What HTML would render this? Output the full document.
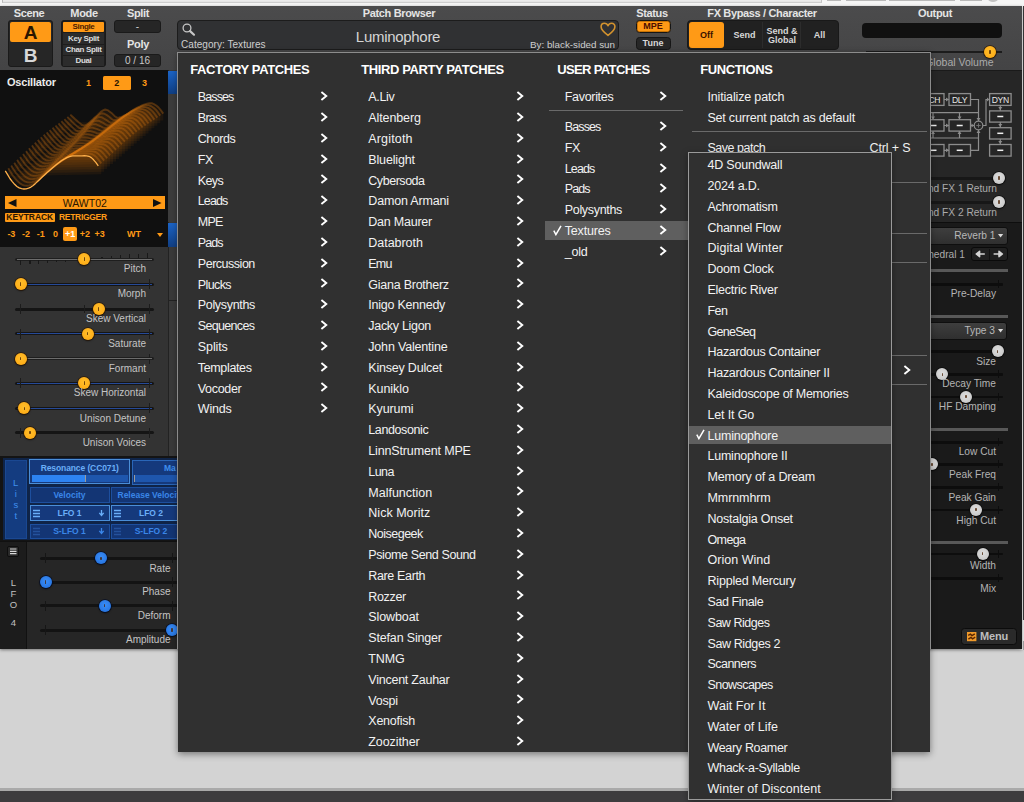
<!DOCTYPE html>
<html><head><meta charset="utf-8"><title>Surge XT</title><style>
*{box-sizing:border-box;margin:0;padding:0}
html,body{width:1024px;height:802px;overflow:hidden}
body{position:relative;background:#d3d3d3;font-family:"Liberation Sans",sans-serif;font-size:12px;color:#eee}
.a{position:absolute}
.t{position:absolute;white-space:nowrap;line-height:1}
.b{font-weight:bold}
.lbl{color:#e4e4e4;font-weight:bold;font-size:11px;text-align:center;letter-spacing:-0.35px}
.mi{position:absolute;white-space:nowrap;font-size:12.5px;line-height:14px;height:14px;color:#f2f2f2;letter-spacing:-0.28px}
.mh{position:absolute;white-space:nowrap;font-size:13px;font-weight:bold;line-height:14px;color:#fff;letter-spacing:-0.4px}
.sl{position:absolute;white-space:nowrap;font-size:10px;line-height:10px;color:#c4c4c4;text-align:right}
.fl{position:absolute;white-space:nowrap;font-size:10px;line-height:10px;color:#ababab;text-align:right}
.kn{position:absolute;width:12px;height:12px;border-radius:50%}
.ko{background:radial-gradient(circle at 50% 42%,#ffbe2c 0%,#ffb01a 62%,#f09c0a 100%);box-shadow:0 0 0 0.8px rgba(45,22,0,.85),0 1px 2px rgba(0,0,0,.6)}
.kb{background:radial-gradient(circle at 50% 42%,#3b8df5 0%,#2a7ae6 62%,#1d66cc 100%);box-shadow:0 0 0 0.8px rgba(0,12,40,.85),0 1px 2px rgba(0,0,0,.6)}
.kg{background:radial-gradient(circle at 50% 42%,#dedede 0%,#cdcdcd 62%,#b0b0b0 100%);box-shadow:0 0 0 0.8px rgba(10,10,10,.85),0 1px 2px rgba(0,0,0,.6)}
.kn i{position:absolute;left:5.3px;top:4.4px;width:1.4px;height:3.2px;border-radius:0.7px;background:rgba(70,30,0,.75)}
.sep{position:absolute;height:1px;background:#6a6a6a}
</style></head><body>
<div class="a" style="left:0;top:0;width:1024px;height:6px;background:#f5f5f5"></div>
<div class="a" style="left:2px;top:0;width:820px;height:3px;background:linear-gradient(#eeeeee,#e2e2e2);border-left:1px solid #b9b9b9;border-right:1px solid #c4c4c4;border-bottom:1px solid #cdcdcd"></div>
<div class="a" style="left:827px;top:0;width:14px;height:1px;background:#b9b9b9"></div>
<div class="a" style="left:846px;top:0;width:39.5px;height:1px;background:#b9b9b9"></div>
<div class="a" style="left:889px;top:0;width:65.5px;height:1px;background:#b9b9b9"></div>
<div class="a" style="left:960px;top:0;width:21.5px;height:1px;background:#b9b9b9"></div>
<div class="a" style="left:988px;top:-4px;width:10px;height:6px;border-radius:50%;background:#c2c2c2"></div>
<div class="a" style="left:0;top:788px;width:1024px;height:4px;background:#a9a9a9"></div>
<div class="a" style="left:0;top:791px;width:1024px;height:11px;background:#3d3c3e"></div>
<div class="a" style="left:1022px;top:6px;width:1px;height:644px;background:#f4f4f4"></div>
<div class="a" style="left:1023px;top:6px;width:1px;height:614px;background:#3a3a3a"></div>
<div class="a" style="left:1023px;top:620px;width:1px;height:21px;background:#f0f0f0"></div>
<div class="a" style="left:1023px;top:641px;width:1px;height:9px;background:#a8a8a8"></div>
<div class="a" style="left:1014px;top:649px;width:9px;height:1px;background:linear-gradient(90deg,rgba(255,255,255,0),#f4f4f4)"></div>
<div class="a" id="synth" style="left:0;top:6px;width:1022px;height:643px;background:#1b1b1b;box-shadow:0 1px 3px rgba(0,0,0,.45);overflow:hidden">
<div class="a" style="left:0;top:0;width:1022px;height:63.5px;background:linear-gradient(#4b4b4c,#444445)"></div>
<div class="t lbl" style="left:0;top:2.3000000000000007px;width:58px">Scene</div>
<div class="a" style="left:8px;top:14px;width:45px;height:47px;background:#262626;border:1px solid #1a1a1a;border-radius:3px"></div>
<div class="a" style="left:10px;top:16px;width:41px;height:20px;background:#ff9a16;border-radius:2px"></div>
<div class="t b" style="left:10px;top:17px;width:41px;text-align:center;font-size:19px;color:#2a1600">A</div>
<div class="t b" style="left:10px;top:40px;width:41px;text-align:center;font-size:19px;color:#d8d8d8">B</div>
<div class="t lbl" style="left:54px;top:2.3000000000000007px;width:60px">Mode</div>
<div class="a" style="left:61px;top:14px;width:45px;height:47px;background:#1d1d1d;border:1px solid #1a1a1a;border-radius:3px"></div>
<div class="a" style="left:63px;top:16.0px;width:41px;height:10.3px;background:#ff9a16;border-radius:1px"></div>
<div class="t b" style="left:58px;top:17.2px;width:51px;text-align:center;font-size:8px;letter-spacing:-0.35px;color:#4a1c00">Single</div>
<div class="a" style="left:63px;top:27.299999999999997px;width:41px;height:10.3px;background:#2c2c2c"></div>
<div class="t b" style="left:58px;top:28.5px;width:51px;text-align:center;font-size:8px;letter-spacing:-0.35px;color:#dcdcdc">Key Split</div>
<div class="a" style="left:63px;top:38.6px;width:41px;height:10.3px;background:#2c2c2c"></div>
<div class="t b" style="left:58px;top:39.800000000000004px;width:51px;text-align:center;font-size:8px;letter-spacing:-0.35px;color:#dcdcdc">Chan Split</div>
<div class="a" style="left:63px;top:49.900000000000006px;width:41px;height:10.3px;background:#2c2c2c"></div>
<div class="t b" style="left:58px;top:51.10000000000001px;width:51px;text-align:center;font-size:8px;letter-spacing:-0.35px;color:#dcdcdc">Dual</div>
<div class="t lbl" style="left:108px;top:2.3000000000000007px;width:60px">Split</div>
<div class="a" style="left:114px;top:14px;width:47px;height:13px;background:#262626;border:1px solid #1a1a1a;border-radius:3px"></div>
<div class="t" style="left:114px;top:15.5px;width:47px;text-align:center;font-size:10px;color:#d0d0d0">-</div>
<div class="t lbl" style="left:108px;top:32.5px;width:60px">Poly</div>
<div class="a" style="left:114px;top:48px;width:47px;height:13px;background:#262626;border:1px solid #1a1a1a;border-radius:3px"></div>
<div class="t" style="left:114px;top:50px;width:47px;text-align:center;font-size:10px;color:#c8c8c8">0 / 16</div>
<div class="t lbl" style="left:340px;top:2.3000000000000007px;width:118px">Patch Browser</div>
<div class="a" style="left:177px;top:14px;width:441.5px;height:29.7px;background:#303133;border:1px solid #1c1c1c;border-radius:4px"></div>
<svg class="a" style="left:181.6px;top:17px" width="14" height="14" viewBox="0 0 14 14"><circle cx="5" cy="5" r="3.9" fill="none" stroke="#c6c6c6" stroke-width="1.3"/><path d="M8.1 8.1 L12 11.7" stroke="#c6c6c6" stroke-width="2.2" stroke-linecap="round"/></svg>
<div class="t" style="left:181px;top:33.5px;font-size:10px;letter-spacing:0.05px;color:#cfcfcf">Category: Textures</div>
<div class="t" style="left:298px;top:23px;width:200px;text-align:center;font-size:15px;color:#d6d6d6;letter-spacing:-0.3px">Luminophore</div>
<div class="t" style="left:415px;top:33.5px;width:200px;text-align:right;font-size:9.8px;color:#cfcfcf">By: black-sided sun</div>
<svg class="a" style="left:599.8px;top:16px" width="16" height="15" viewBox="0 0 16 15"><path d="M8 3.7 C7.3 2 5.8 1.3 4.4 1.3 C2.4 1.3 1.1 2.9 1.1 4.8 C1.1 8.2 4.6 10.9 8 13.4 C11.4 10.9 14.9 8.2 14.9 4.8 C14.9 2.9 13.6 1.3 11.6 1.3 C10.2 1.3 8.7 2 8 3.7 Z" fill="none" stroke="#d2922e" stroke-width="1.6" stroke-linejoin="round"/></svg>
<div class="t lbl" style="left:622px;top:2.3000000000000007px;width:60px">Status</div>
<div class="a" style="left:635.5px;top:14px;width:35px;height:13px;background:#ff9a16;border:1.5px solid #161616;border-radius:3.5px;box-shadow:inset 0 0 0 0.7px #b86800"></div>
<div class="t b" style="left:636px;top:16.4px;width:34px;text-align:center;font-size:9px;color:#4a0e00">MPE</div>
<div class="a" style="left:635.5px;top:31px;width:35px;height:13px;background:#272727;border:1.5px solid #161616;border-radius:3.5px"></div>
<div class="t b" style="left:636px;top:33px;width:34px;text-align:center;font-size:9px;color:#d8d8d8">Tune</div>
<div class="t lbl" style="left:682px;top:2.3000000000000007px;width:160px">FX Bypass / Character</div>
<div class="a" style="left:687px;top:14px;width:152px;height:30px;background:#212121;border:1px solid #191919;border-radius:4px"></div>
<div class="a" style="left:689px;top:16px;width:35px;height:26px;background:#ff9a16;border-radius:3px"></div>
<div class="t b" style="left:689px;top:25px;width:35px;text-align:center;font-size:9px;color:#3a1200">Off</div>
<div class="t b" style="left:726px;top:25px;width:37px;text-align:center;font-size:9px;color:#d8d8d8">Send</div>
<div class="t b" style="left:763px;top:20.5px;width:38px;text-align:center;font-size:9px;line-height:9px;color:#d8d8d8;white-space:normal">Send &amp;<br>Global</div>
<div class="t b" style="left:801px;top:25px;width:37px;text-align:center;font-size:9px;color:#d8d8d8">All</div>
<div class="a" style="left:762px;top:16px;width:1px;height:26px;background:#2c2c2c"></div>
<div class="a" style="left:800px;top:16px;width:1px;height:26px;background:#2c2c2c"></div>
<div class="t lbl" style="left:905px;top:2.3000000000000007px;width:60px">Output</div>
<div class="a" style="left:862px;top:17px;width:140px;height:15px;background:#101010;border-radius:4px"></div>
<div class="a" style="left:866px;top:45px;width:136px;height:2px;background:#1c1c1c"></div>
<div class="kn ko" style="left:984px;top:40px"><i></i></div>
<div class="fl" style="left:860px;top:51px;width:133.5px;font-size:10.5px;line-height:11px">Global Volume</div>
<div class="a" style="left:0;top:63.5px;width:168px;height:177px;background:#101010"></div>
<div class="t b" style="left:7px;top:70.5px;font-size:11px;color:#ececec;letter-spacing:-0.2px">Oscillator</div>
<div class="t b" style="left:80px;top:73px;width:17px;text-align:center;font-size:9px;color:#ff9a16">1</div>
<div class="a" style="left:103px;top:70px;width:27.5px;height:13.5px;background:#ff9a16;border-radius:1.5px"></div>
<div class="t b" style="left:103px;top:73px;width:27.5px;text-align:center;font-size:9px;color:#2a1600">2</div>
<div class="t b" style="left:136px;top:73px;width:17px;text-align:center;font-size:9px;color:#ff9a16">3</div>
<svg class="a" style="left:0;top:89px;filter:blur(0.75px)" width="168" height="100" viewBox="0 95 168 100"><polygon points="70.3,114.6 72.6,116.8 75.0,119.0 77.3,121.0 79.6,123.1 81.9,125.0 84.2,125.6 86.6,124.7 88.9,122.9 91.2,120.7 93.5,118.6 95.9,116.6 98.2,114.3 100.5,112.1 102.8,110.4 105.2,109.5 107.5,110.1 109.8,111.8 112.2,113.6 114.5,115.9 116.8,117.6 119.1,117.4 121.5,116.8 123.8,115.7 126.1,114.6 128.4,113.3 130.8,111.7 133.1,110.1 135.4,108.6 137.7,107.4 140.1,106.3 142.4,105.2 144.7,104.3 147.0,103.6 149.3,103.2 151.7,103.2 154.0,104.1 156.3,105.5 158.6,107.5 161.0,110.4 163.3,113.6 163.3,120.6 70.3,122.6" fill="#c8640a" fill-opacity="0.085"/><polyline points="70.3,114.6 72.6,116.8 75.0,119.0 77.3,121.0 79.6,123.1 81.9,125.0 84.2,125.6 86.6,124.7 88.9,122.9 91.2,120.7 93.5,118.6 95.9,116.6 98.2,114.3 100.5,112.1 102.8,110.4 105.2,109.5 107.5,110.1 109.8,111.8 112.2,113.6 114.5,115.9 116.8,117.6 119.1,117.4 121.5,116.8 123.8,115.7 126.1,114.6 128.4,113.3 130.8,111.7 133.1,110.1 135.4,108.6 137.7,107.4 140.1,106.3 142.4,105.2 144.7,104.3 147.0,103.6 149.3,103.2 151.7,103.2 154.0,104.1 156.3,105.5 158.6,107.5 161.0,110.4 163.3,113.6" fill="none" stroke="#e07a10" stroke-opacity="0.30" stroke-width="1.9" stroke-linejoin="round"/><polygon points="67.3,116.9 69.7,119.2 72.0,121.6 74.3,123.7 76.6,125.9 79.0,127.8 81.3,128.6 83.6,127.8 85.9,126.2 88.3,124.1 90.6,122.2 92.9,120.2 95.2,118.0 97.6,115.9 99.9,114.2 102.2,113.2 104.5,113.7 106.9,115.1 109.2,116.7 111.5,118.7 113.8,120.2 116.2,119.8 118.5,119.0 120.8,117.9 123.1,116.7 125.5,115.3 127.8,113.7 130.1,112.0 132.4,110.5 134.8,109.3 137.1,108.2 139.4,107.1 141.7,106.2 144.1,105.5 146.4,105.1 148.7,105.1 151.0,106.0 153.4,107.5 155.7,109.4 158.0,112.4 160.3,115.6 160.3,123.2 67.3,125.2" fill="#c8640a" fill-opacity="0.085"/><polyline points="67.3,116.9 69.7,119.2 72.0,121.6 74.3,123.7 76.6,125.9 79.0,127.8 81.3,128.6 83.6,127.8 85.9,126.2 88.3,124.1 90.6,122.2 92.9,120.2 95.2,118.0 97.6,115.9 99.9,114.2 102.2,113.2 104.5,113.7 106.9,115.1 109.2,116.7 111.5,118.7 113.8,120.2 116.2,119.8 118.5,119.0 120.8,117.9 123.1,116.7 125.5,115.3 127.8,113.7 130.1,112.0 132.4,110.5 134.8,109.3 137.1,108.2 139.4,107.1 141.7,106.2 144.1,105.5 146.4,105.1 148.7,105.1 151.0,106.0 153.4,107.5 155.7,109.4 158.0,112.4 160.3,115.6" fill="none" stroke="#e07a10" stroke-opacity="0.30" stroke-width="1.9" stroke-linejoin="round"/><polygon points="64.4,119.1 66.7,121.6 69.0,124.0 71.4,126.2 73.7,128.6 76.0,130.6 78.3,131.4 80.7,130.8 83.0,129.4 85.3,127.5 87.6,125.7 90.0,123.9 92.3,121.7 94.6,119.6 96.9,117.9 99.3,116.9 101.6,117.2 103.9,118.5 106.2,119.8 108.6,121.6 110.9,122.8 113.2,122.3 115.5,121.4 117.9,120.2 120.2,118.9 122.5,117.4 124.8,115.7 127.2,114.0 129.5,112.5 131.8,111.2 134.1,110.1 136.5,109.1 138.8,108.2 141.1,107.5 143.4,107.1 145.8,107.1 148.1,107.9 150.4,109.4 152.7,111.4 155.1,114.4 157.4,117.6 157.4,125.7 64.4,127.7" fill="#c8640a" fill-opacity="0.085"/><polyline points="64.4,119.1 66.7,121.6 69.0,124.0 71.4,126.2 73.7,128.6 76.0,130.6 78.3,131.4 80.7,130.8 83.0,129.4 85.3,127.5 87.6,125.7 90.0,123.9 92.3,121.7 94.6,119.6 96.9,117.9 99.3,116.9 101.6,117.2 103.9,118.5 106.2,119.8 108.6,121.6 110.9,122.8 113.2,122.3 115.5,121.4 117.9,120.2 120.2,118.9 122.5,117.4 124.8,115.7 127.2,114.0 129.5,112.5 131.8,111.2 134.1,110.1 136.5,109.1 138.8,108.2 141.1,107.5 143.4,107.1 145.8,107.1 148.1,107.9 150.4,109.4 152.7,111.4 155.1,114.4 157.4,117.6" fill="none" stroke="#e07a10" stroke-opacity="0.30" stroke-width="1.9" stroke-linejoin="round"/><polygon points="61.4,121.2 63.8,123.8 66.1,126.4 68.4,128.7 70.7,131.2 73.1,133.2 75.4,134.2 77.7,133.8 80.0,132.5 82.4,130.8 84.7,129.1 87.0,127.4 89.3,125.3 91.7,123.3 94.0,121.6 96.3,120.5 98.6,120.7 101.0,121.8 103.3,122.9 105.6,124.5 107.9,125.4 110.3,124.9 112.6,123.8 114.9,122.5 117.2,121.1 119.6,119.6 121.9,117.9 124.2,116.1 126.5,114.6 128.9,113.3 131.2,112.2 133.5,111.1 135.8,110.2 138.2,109.5 140.5,109.1 142.8,109.1 145.1,109.8 147.5,111.3 149.8,113.3 152.1,116.3 154.4,119.6 154.4,128.3 61.4,130.3" fill="#c8640a" fill-opacity="0.085"/><polyline points="61.4,121.2 63.8,123.8 66.1,126.4 68.4,128.7 70.7,131.2 73.1,133.2 75.4,134.2 77.7,133.8 80.0,132.5 82.4,130.8 84.7,129.1 87.0,127.4 89.3,125.3 91.7,123.3 94.0,121.6 96.3,120.5 98.6,120.7 101.0,121.8 103.3,122.9 105.6,124.5 107.9,125.4 110.3,124.9 112.6,123.8 114.9,122.5 117.2,121.1 119.6,119.6 121.9,117.9 124.2,116.1 126.5,114.6 128.9,113.3 131.2,112.2 133.5,111.1 135.8,110.2 138.2,109.5 140.5,109.1 142.8,109.1 145.1,109.8 147.5,111.3 149.8,113.3 152.1,116.3 154.4,119.6" fill="none" stroke="#e07a10" stroke-opacity="0.30" stroke-width="1.9" stroke-linejoin="round"/><polygon points="58.5,123.4 60.8,126.1 63.1,128.8 65.5,131.2 67.8,133.7 70.1,135.8 72.4,136.9 74.8,136.6 77.1,135.5 79.4,133.9 81.7,132.4 84.1,130.8 86.4,128.9 88.7,126.9 91.0,125.2 93.4,124.1 95.7,124.2 98.0,125.1 100.3,126.0 102.7,127.3 105.0,128.1 107.3,127.4 109.6,126.3 112.0,124.9 114.3,123.5 116.6,121.9 118.9,120.1 121.3,118.3 123.6,116.7 125.9,115.4 128.2,114.3 130.6,113.3 132.9,112.4 135.2,111.6 137.5,111.2 139.9,111.1 142.2,111.8 144.5,113.2 146.8,115.3 149.2,118.3 151.5,121.5 151.5,130.8 58.5,132.8" fill="#c8640a" fill-opacity="0.085"/><polyline points="58.5,123.4 60.8,126.1 63.1,128.8 65.5,131.2 67.8,133.7 70.1,135.8 72.4,136.9 74.8,136.6 77.1,135.5 79.4,133.9 81.7,132.4 84.1,130.8 86.4,128.9 88.7,126.9 91.0,125.2 93.4,124.1 95.7,124.2 98.0,125.1 100.3,126.0 102.7,127.3 105.0,128.1 107.3,127.4 109.6,126.3 112.0,124.9 114.3,123.5 116.6,121.9 118.9,120.1 121.3,118.3 123.6,116.7 125.9,115.4 128.2,114.3 130.6,113.3 132.9,112.4 135.2,111.6 137.5,111.2 139.9,111.1 142.2,111.8 144.5,113.2 146.8,115.3 149.2,118.3 151.5,121.5" fill="none" stroke="#e07a10" stroke-opacity="0.30" stroke-width="1.9" stroke-linejoin="round"/><polygon points="55.5,125.5 57.9,128.3 60.2,131.1 62.5,133.6 64.8,136.1 67.2,138.3 69.5,139.5 71.8,139.3 74.1,138.4 76.5,137.0 78.8,135.6 81.1,134.1 83.4,132.3 85.8,130.4 88.1,128.7 90.4,127.6 92.7,127.6 95.1,128.3 97.4,129.1 99.7,130.2 102.0,130.8 104.4,130.0 106.7,128.8 109.0,127.4 111.3,125.9 113.7,124.2 116.0,122.4 118.3,120.6 120.6,119.0 123.0,117.7 125.3,116.6 127.6,115.5 129.9,114.6 132.3,113.8 134.6,113.3 136.9,113.2 139.2,113.9 141.6,115.3 143.9,117.3 146.2,120.2 148.5,123.5 148.5,133.4 55.5,135.4" fill="#c8640a" fill-opacity="0.085"/><polyline points="55.5,125.5 57.9,128.3 60.2,131.1 62.5,133.6 64.8,136.1 67.2,138.3 69.5,139.5 71.8,139.3 74.1,138.4 76.5,137.0 78.8,135.6 81.1,134.1 83.4,132.3 85.8,130.4 88.1,128.7 90.4,127.6 92.7,127.6 95.1,128.3 97.4,129.1 99.7,130.2 102.0,130.8 104.4,130.0 106.7,128.8 109.0,127.4 111.3,125.9 113.7,124.2 116.0,122.4 118.3,120.6 120.6,119.0 123.0,117.7 125.3,116.6 127.6,115.5 129.9,114.6 132.3,113.8 134.6,113.3 136.9,113.2 139.2,113.9 141.6,115.3 143.9,117.3 146.2,120.2 148.5,123.5" fill="none" stroke="#e07a10" stroke-opacity="0.30" stroke-width="1.9" stroke-linejoin="round"/><polygon points="52.6,127.7 54.9,130.6 57.2,133.5 59.5,136.0 61.9,138.6 64.2,140.8 66.5,142.0 68.8,142.0 71.2,141.2 73.5,140.0 75.8,138.7 78.1,137.3 80.5,135.6 82.8,133.7 85.1,132.1 87.4,131.0 89.8,130.9 92.1,131.5 94.4,132.1 96.7,133.0 99.1,133.4 101.4,132.6 103.7,131.3 106.0,129.8 108.4,128.3 110.7,126.6 113.0,124.8 115.3,123.0 117.7,121.4 120.0,120.1 122.3,118.9 124.6,117.9 127.0,116.9 129.3,116.2 131.6,115.6 133.9,115.5 136.3,116.0 138.6,117.3 140.9,119.3 143.2,122.2 145.6,125.5 145.6,135.9 52.6,137.9" fill="#c8640a" fill-opacity="0.085"/><polyline points="52.6,127.7 54.9,130.6 57.2,133.5 59.5,136.0 61.9,138.6 64.2,140.8 66.5,142.0 68.8,142.0 71.2,141.2 73.5,140.0 75.8,138.7 78.1,137.3 80.5,135.6 82.8,133.7 85.1,132.1 87.4,131.0 89.8,130.9 92.1,131.5 94.4,132.1 96.7,133.0 99.1,133.4 101.4,132.6 103.7,131.3 106.0,129.8 108.4,128.3 110.7,126.6 113.0,124.8 115.3,123.0 117.7,121.4 120.0,120.1 122.3,118.9 124.6,117.9 127.0,116.9 129.3,116.2 131.6,115.6 133.9,115.5 136.3,116.0 138.6,117.3 140.9,119.3 143.2,122.2 145.6,125.5" fill="none" stroke="#e07a10" stroke-opacity="0.30" stroke-width="1.9" stroke-linejoin="round"/><polygon points="49.6,130.0 51.9,132.9 54.3,135.8 56.6,138.4 58.9,141.0 61.2,143.3 63.6,144.5 65.9,144.6 68.2,144.0 70.5,142.9 72.9,141.8 75.2,140.4 77.5,138.8 79.8,137.0 82.2,135.4 84.5,134.3 86.8,134.1 89.1,134.5 91.5,135.0 93.8,135.7 96.1,136.0 98.4,135.1 100.8,133.8 103.1,132.3 105.4,130.7 107.7,129.0 110.1,127.2 112.4,125.4 114.7,123.8 117.0,122.5 119.4,121.3 121.7,120.3 124.0,119.4 126.3,118.6 128.7,118.0 131.0,117.8 133.3,118.3 135.6,119.5 138.0,121.4 140.3,124.3 142.6,127.5 142.6,138.5 49.6,140.5" fill="#c8640a" fill-opacity="0.085"/><polyline points="49.6,130.0 51.9,132.9 54.3,135.8 56.6,138.4 58.9,141.0 61.2,143.3 63.6,144.5 65.9,144.6 68.2,144.0 70.5,142.9 72.9,141.8 75.2,140.4 77.5,138.8 79.8,137.0 82.2,135.4 84.5,134.3 86.8,134.1 89.1,134.5 91.5,135.0 93.8,135.7 96.1,136.0 98.4,135.1 100.8,133.8 103.1,132.3 105.4,130.7 107.7,129.0 110.1,127.2 112.4,125.4 114.7,123.8 117.0,122.5 119.4,121.3 121.7,120.3 124.0,119.4 126.3,118.6 128.7,118.0 131.0,117.8 133.3,118.3 135.6,119.5 138.0,121.4 140.3,124.3 142.6,127.5" fill="none" stroke="#e07a10" stroke-opacity="0.30" stroke-width="1.9" stroke-linejoin="round"/><polygon points="46.7,132.3 49.0,135.3 51.3,138.2 53.6,140.9 56.0,143.5 58.3,145.7 60.6,147.0 62.9,147.2 65.3,146.7 67.6,145.7 69.9,144.7 72.2,143.5 74.6,141.9 76.9,140.2 79.2,138.6 81.5,137.5 83.9,137.2 86.2,137.5 88.5,137.8 90.8,138.4 93.2,138.5 95.5,137.5 97.8,136.2 100.1,134.7 102.5,133.1 104.8,131.4 107.1,129.6 109.4,127.9 111.8,126.3 114.1,125.0 116.4,123.8 118.7,122.8 121.1,121.9 123.4,121.1 125.7,120.4 128.0,120.2 130.4,120.6 132.7,121.8 135.0,123.7 137.3,126.5 139.7,129.6 139.7,141.0 46.7,143.0" fill="#c8640a" fill-opacity="0.085"/><polyline points="46.7,132.3 49.0,135.3 51.3,138.2 53.6,140.9 56.0,143.5 58.3,145.7 60.6,147.0 62.9,147.2 65.3,146.7 67.6,145.7 69.9,144.7 72.2,143.5 74.6,141.9 76.9,140.2 79.2,138.6 81.5,137.5 83.9,137.2 86.2,137.5 88.5,137.8 90.8,138.4 93.2,138.5 95.5,137.5 97.8,136.2 100.1,134.7 102.5,133.1 104.8,131.4 107.1,129.6 109.4,127.9 111.8,126.3 114.1,125.0 116.4,123.8 118.7,122.8 121.1,121.9 123.4,121.1 125.7,120.4 128.0,120.2 130.4,120.6 132.7,121.8 135.0,123.7 137.3,126.5 139.7,129.6" fill="none" stroke="#e07a10" stroke-opacity="0.30" stroke-width="1.9" stroke-linejoin="round"/><polygon points="43.7,134.7 46.0,137.7 48.4,140.7 50.7,143.4 53.0,146.0 55.3,148.2 57.7,149.5 60.0,149.8 62.3,149.4 64.6,148.5 67.0,147.6 69.3,146.4 71.6,144.9 73.9,143.3 76.3,141.7 78.6,140.6 80.9,140.2 83.2,140.4 85.6,140.5 87.9,140.9 90.2,140.9 92.5,139.9 94.9,138.6 97.2,137.1 99.5,135.5 101.8,133.8 104.2,132.1 106.5,130.3 108.8,128.8 111.1,127.5 113.5,126.4 115.8,125.4 118.1,124.5 120.4,123.6 122.8,123.0 125.1,122.7 127.4,123.0 129.7,124.2 132.1,126.0 134.4,128.8 136.7,131.9 136.7,143.6 43.7,145.6" fill="#c8640a" fill-opacity="0.085"/><polyline points="43.7,134.7 46.0,137.7 48.4,140.7 50.7,143.4 53.0,146.0 55.3,148.2 57.7,149.5 60.0,149.8 62.3,149.4 64.6,148.5 67.0,147.6 69.3,146.4 71.6,144.9 73.9,143.3 76.3,141.7 78.6,140.6 80.9,140.2 83.2,140.4 85.6,140.5 87.9,140.9 90.2,140.9 92.5,139.9 94.9,138.6 97.2,137.1 99.5,135.5 101.8,133.8 104.2,132.1 106.5,130.3 108.8,128.8 111.1,127.5 113.5,126.4 115.8,125.4 118.1,124.5 120.4,123.6 122.8,123.0 125.1,122.7 127.4,123.0 129.7,124.2 132.1,126.0 134.4,128.8 136.7,131.9" fill="none" stroke="#e07a10" stroke-opacity="0.30" stroke-width="1.9" stroke-linejoin="round"/><polygon points="40.8,137.2 43.1,140.3 45.4,143.3 47.7,145.9 50.1,148.5 52.4,150.8 54.7,152.1 57.0,152.4 59.4,152.1 61.7,151.3 64.0,150.5 66.3,149.4 68.7,147.9 71.0,146.3 73.3,144.7 75.6,143.5 78.0,143.1 80.3,143.1 82.6,143.1 84.9,143.4 87.3,143.3 89.6,142.2 91.9,140.9 94.2,139.4 96.6,137.8 98.9,136.2 101.2,134.4 103.5,132.7 105.9,131.2 108.2,130.0 110.5,129.0 112.8,128.0 115.2,127.1 117.5,126.3 119.8,125.6 122.1,125.3 124.5,125.6 126.8,126.6 129.1,128.4 131.4,131.1 133.8,134.2 133.8,146.1 40.8,148.1" fill="#c8640a" fill-opacity="0.085"/><polyline points="40.8,137.2 43.1,140.3 45.4,143.3 47.7,145.9 50.1,148.5 52.4,150.8 54.7,152.1 57.0,152.4 59.4,152.1 61.7,151.3 64.0,150.5 66.3,149.4 68.7,147.9 71.0,146.3 73.3,144.7 75.6,143.5 78.0,143.1 80.3,143.1 82.6,143.1 84.9,143.4 87.3,143.3 89.6,142.2 91.9,140.9 94.2,139.4 96.6,137.8 98.9,136.2 101.2,134.4 103.5,132.7 105.9,131.2 108.2,130.0 110.5,129.0 112.8,128.0 115.2,127.1 117.5,126.3 119.8,125.6 122.1,125.3 124.5,125.6 126.8,126.6 129.1,128.4 131.4,131.1 133.8,134.2" fill="none" stroke="#e07a10" stroke-opacity="0.30" stroke-width="1.9" stroke-linejoin="round"/><polygon points="37.8,139.9 40.1,142.9 42.4,146.0 44.8,148.6 47.1,151.2 49.4,153.4 51.8,154.7 54.1,155.1 56.4,154.8 58.7,154.1 61.0,153.3 63.4,152.3 65.7,150.8 68.0,149.2 70.3,147.7 72.7,146.4 75.0,145.9 77.3,145.8 79.7,145.7 82.0,145.7 84.3,145.5 86.6,144.4 89.0,143.1 91.3,141.6 93.6,140.0 95.9,138.4 98.2,136.8 100.6,135.1 102.9,133.7 105.2,132.5 107.5,131.5 109.9,130.6 112.2,129.8 114.5,129.0 116.8,128.3 119.2,128.0 121.5,128.2 123.8,129.2 126.1,131.0 128.5,133.6 130.8,136.6 130.8,148.7 37.8,150.7" fill="#c8640a" fill-opacity="0.085"/><polyline points="37.8,139.9 40.1,142.9 42.4,146.0 44.8,148.6 47.1,151.2 49.4,153.4 51.8,154.7 54.1,155.1 56.4,154.8 58.7,154.1 61.0,153.3 63.4,152.3 65.7,150.8 68.0,149.2 70.3,147.7 72.7,146.4 75.0,145.9 77.3,145.8 79.7,145.7 82.0,145.7 84.3,145.5 86.6,144.4 89.0,143.1 91.3,141.6 93.6,140.0 95.9,138.4 98.2,136.8 100.6,135.1 102.9,133.7 105.2,132.5 107.5,131.5 109.9,130.6 112.2,129.8 114.5,129.0 116.8,128.3 119.2,128.0 121.5,128.2 123.8,129.2 126.1,131.0 128.5,133.6 130.8,136.6" fill="none" stroke="#e07a10" stroke-opacity="0.30" stroke-width="1.9" stroke-linejoin="round"/><polygon points="34.8,142.6 37.2,145.7 39.5,148.7 41.8,151.4 44.1,153.9 46.5,156.1 48.8,157.4 51.1,157.8 53.4,157.6 55.8,157.0 58.1,156.2 60.4,155.2 62.7,153.7 65.1,152.1 67.4,150.6 69.7,149.3 72.0,148.6 74.4,148.4 76.7,148.1 79.0,148.0 81.3,147.6 83.7,146.5 86.0,145.2 88.3,143.7 90.6,142.2 93.0,140.6 95.3,139.0 97.6,137.4 99.9,136.1 102.3,135.0 104.6,134.1 106.9,133.2 109.2,132.4 111.6,131.7 113.9,131.0 116.2,130.7 118.5,130.8 120.9,131.8 123.2,133.6 125.5,136.2 127.8,139.1 127.8,151.3 34.8,153.3" fill="#c8640a" fill-opacity="0.085"/><polyline points="34.8,142.6 37.2,145.7 39.5,148.7 41.8,151.4 44.1,153.9 46.5,156.1 48.8,157.4 51.1,157.8 53.4,157.6 55.8,157.0 58.1,156.2 60.4,155.2 62.7,153.7 65.1,152.1 67.4,150.6 69.7,149.3 72.0,148.6 74.4,148.4 76.7,148.1 79.0,148.0 81.3,147.6 83.7,146.5 86.0,145.2 88.3,143.7 90.6,142.2 93.0,140.6 95.3,139.0 97.6,137.4 99.9,136.1 102.3,135.0 104.6,134.1 106.9,133.2 109.2,132.4 111.6,131.7 113.9,131.0 116.2,130.7 118.5,130.8 120.9,131.8 123.2,133.6 125.5,136.2 127.8,139.1" fill="none" stroke="#e07a10" stroke-opacity="0.30" stroke-width="1.9" stroke-linejoin="round"/><polygon points="31.9,145.4 34.2,148.5 36.5,151.6 38.9,154.2 41.2,156.7 43.5,158.9 45.8,160.2 48.2,160.6 50.5,160.4 52.8,159.9 55.1,159.1 57.5,158.1 59.8,156.7 62.1,155.1 64.4,153.5 66.8,152.1 69.1,151.3 71.4,150.9 73.7,150.5 76.1,150.2 78.4,149.7 80.7,148.6 83.0,147.2 85.4,145.7 87.7,144.2 90.0,142.7 92.3,141.2 94.7,139.7 97.0,138.4 99.3,137.4 101.6,136.6 104.0,135.8 106.3,135.1 108.6,134.4 110.9,133.7 113.3,133.4 115.6,133.6 117.9,134.5 120.2,136.3 122.6,138.8 124.9,141.7 124.9,153.8 31.9,155.8" fill="#c8640a" fill-opacity="0.085"/><polyline points="31.9,145.4 34.2,148.5 36.5,151.6 38.9,154.2 41.2,156.7 43.5,158.9 45.8,160.2 48.2,160.6 50.5,160.4 52.8,159.9 55.1,159.1 57.5,158.1 59.8,156.7 62.1,155.1 64.4,153.5 66.8,152.1 69.1,151.3 71.4,150.9 73.7,150.5 76.1,150.2 78.4,149.7 80.7,148.6 83.0,147.2 85.4,145.7 87.7,144.2 90.0,142.7 92.3,141.2 94.7,139.7 97.0,138.4 99.3,137.4 101.6,136.6 104.0,135.8 106.3,135.1 108.6,134.4 110.9,133.7 113.3,133.4 115.6,133.6 117.9,134.5 120.2,136.3 122.6,138.8 124.9,141.7" fill="none" stroke="#e07a10" stroke-opacity="0.30" stroke-width="1.9" stroke-linejoin="round"/><polygon points="28.9,148.2 31.3,151.4 33.6,154.5 35.9,157.2 38.2,159.7 40.6,161.7 42.9,163.0 45.2,163.5 47.5,163.4 49.9,162.8 52.2,162.1 54.5,161.1 56.8,159.6 59.2,158.0 61.5,156.4 63.8,154.9 66.1,154.0 68.5,153.4 70.8,152.8 73.1,152.4 75.4,151.7 77.8,150.5 80.1,149.2 82.4,147.7 84.7,146.2 87.1,144.7 89.4,143.3 91.7,141.8 94.0,140.7 96.4,139.7 98.7,139.0 101.0,138.3 103.3,137.7 105.7,137.0 108.0,136.5 110.3,136.1 112.6,136.3 115.0,137.2 117.3,139.0 119.6,141.5 121.9,144.4 121.9,156.4 28.9,158.4" fill="#c8640a" fill-opacity="0.085"/><polyline points="28.9,148.2 31.3,151.4 33.6,154.5 35.9,157.2 38.2,159.7 40.6,161.7 42.9,163.0 45.2,163.5 47.5,163.4 49.9,162.8 52.2,162.1 54.5,161.1 56.8,159.6 59.2,158.0 61.5,156.4 63.8,154.9 66.1,154.0 68.5,153.4 70.8,152.8 73.1,152.4 75.4,151.7 77.8,150.5 80.1,149.2 82.4,147.7 84.7,146.2 87.1,144.7 89.4,143.3 91.7,141.8 94.0,140.7 96.4,139.7 98.7,139.0 101.0,138.3 103.3,137.7 105.7,137.0 108.0,136.5 110.3,136.1 112.6,136.3 115.0,137.2 117.3,139.0 119.6,141.5 121.9,144.4" fill="none" stroke="#e07a10" stroke-opacity="0.30" stroke-width="1.9" stroke-linejoin="round"/><polygon points="26.0,151.1 28.3,154.3 30.6,157.5 33.0,160.2 35.3,162.7 37.6,164.7 39.9,166.0 42.3,166.5 44.6,166.4 46.9,165.9 49.2,165.2 51.6,164.1 53.9,162.7 56.2,161.0 58.5,159.3 60.9,157.8 63.2,156.7 65.5,155.9 67.8,155.1 70.2,154.5 72.5,153.7 74.8,152.4 77.1,151.0 79.5,149.6 81.8,148.1 84.1,146.7 86.4,145.2 88.8,143.9 91.1,142.8 93.4,142.0 95.7,141.4 98.1,140.8 100.4,140.2 102.7,139.7 105.0,139.1 107.4,138.8 109.7,139.0 112.0,140.0 114.3,141.7 116.7,144.3 119.0,147.1 119.0,158.9 26.0,160.9" fill="#c8640a" fill-opacity="0.085"/><polyline points="26.0,151.1 28.3,154.3 30.6,157.5 33.0,160.2 35.3,162.7 37.6,164.7 39.9,166.0 42.3,166.5 44.6,166.4 46.9,165.9 49.2,165.2 51.6,164.1 53.9,162.7 56.2,161.0 58.5,159.3 60.9,157.8 63.2,156.7 65.5,155.9 67.8,155.1 70.2,154.5 72.5,153.7 74.8,152.4 77.1,151.0 79.5,149.6 81.8,148.1 84.1,146.7 86.4,145.2 88.8,143.9 91.1,142.8 93.4,142.0 95.7,141.4 98.1,140.8 100.4,140.2 102.7,139.7 105.0,139.1 107.4,138.8 109.7,139.0 112.0,140.0 114.3,141.7 116.7,144.3 119.0,147.1" fill="none" stroke="#e07a10" stroke-opacity="0.30" stroke-width="1.9" stroke-linejoin="round"/><polygon points="23.0,154.0 25.4,157.3 27.7,160.6 30.0,163.3 32.3,165.7 34.7,167.8 37.0,169.0 39.3,169.5 41.6,169.5 44.0,169.0 46.3,168.3 48.6,167.2 50.9,165.7 53.3,164.0 55.6,162.3 57.9,160.6 60.2,159.4 62.6,158.4 64.9,157.5 67.2,156.6 69.5,155.6 71.9,154.3 74.2,152.9 76.5,151.4 78.8,149.9 81.2,148.5 83.5,147.2 85.8,145.9 88.1,144.9 90.5,144.2 92.8,143.6 95.1,143.2 97.4,142.7 99.8,142.2 102.1,141.7 104.4,141.5 106.7,141.7 109.1,142.7 111.4,144.5 113.7,147.0 116.0,149.9 116.0,161.5 23.0,163.5" fill="#c8640a" fill-opacity="0.085"/><polyline points="23.0,154.0 25.4,157.3 27.7,160.6 30.0,163.3 32.3,165.7 34.7,167.8 37.0,169.0 39.3,169.5 41.6,169.5 44.0,169.0 46.3,168.3 48.6,167.2 50.9,165.7 53.3,164.0 55.6,162.3 57.9,160.6 60.2,159.4 62.6,158.4 64.9,157.5 67.2,156.6 69.5,155.6 71.9,154.3 74.2,152.9 76.5,151.4 78.8,149.9 81.2,148.5 83.5,147.2 85.8,145.9 88.1,144.9 90.5,144.2 92.8,143.6 95.1,143.2 97.4,142.7 99.8,142.2 102.1,141.7 104.4,141.5 106.7,141.7 109.1,142.7 111.4,144.5 113.7,147.0 116.0,149.9" fill="none" stroke="#e07a10" stroke-opacity="0.30" stroke-width="1.9" stroke-linejoin="round"/><polygon points="20.1,157.0 22.4,160.4 24.7,163.6 27.0,166.4 29.4,168.9 31.7,170.9 34.0,172.1 36.3,172.7 38.7,172.6 41.0,172.2 43.3,171.5 45.6,170.4 48.0,168.9 50.3,167.1 52.6,165.3 54.9,163.5 57.3,162.1 59.6,161.0 61.9,159.8 64.2,158.7 66.6,157.6 68.9,156.2 71.2,154.7 73.5,153.2 75.9,151.7 78.2,150.3 80.5,149.0 82.8,147.8 85.2,146.9 87.5,146.2 89.8,145.8 92.1,145.4 94.5,145.1 96.8,144.7 99.1,144.3 101.4,144.1 103.8,144.3 106.1,145.4 108.4,147.2 110.7,149.8 113.1,152.6 113.1,164.0 20.1,166.0" fill="#c8640a" fill-opacity="0.085"/><polyline points="20.1,157.0 22.4,160.4 24.7,163.6 27.0,166.4 29.4,168.9 31.7,170.9 34.0,172.1 36.3,172.7 38.7,172.6 41.0,172.2 43.3,171.5 45.6,170.4 48.0,168.9 50.3,167.1 52.6,165.3 54.9,163.5 57.3,162.1 59.6,161.0 61.9,159.8 64.2,158.7 66.6,157.6 68.9,156.2 71.2,154.7 73.5,153.2 75.9,151.7 78.2,150.3 80.5,149.0 82.8,147.8 85.2,146.9 87.5,146.2 89.8,145.8 92.1,145.4 94.5,145.1 96.8,144.7 99.1,144.3 101.4,144.1 103.8,144.3 106.1,145.4 108.4,147.2 110.7,149.8 113.1,152.6" fill="none" stroke="#e07a10" stroke-opacity="0.30" stroke-width="1.9" stroke-linejoin="round"/><polygon points="17.1,159.9 19.4,163.3 21.8,166.7 24.1,169.5 26.4,172.0 28.7,174.0 31.1,175.3 33.4,175.9 35.7,175.9 38.0,175.5 40.4,174.8 42.7,173.7 45.0,172.1 47.3,170.3 49.7,168.4 52.0,166.5 54.3,164.9 56.6,163.6 59.0,162.2 61.3,160.9 63.6,159.6 65.9,158.1 68.3,156.5 70.6,155.0 72.9,153.5 75.2,152.1 77.6,150.8 79.9,149.7 82.2,148.8 84.5,148.2 86.9,147.9 89.2,147.6 91.5,147.4 93.8,147.0 96.2,146.7 98.5,146.6 100.8,146.9 103.1,148.0 105.5,149.9 107.8,152.5 110.1,155.4 110.1,166.6 17.1,168.6" fill="#c8640a" fill-opacity="0.085"/><polyline points="17.1,159.9 19.4,163.3 21.8,166.7 24.1,169.5 26.4,172.0 28.7,174.0 31.1,175.3 33.4,175.9 35.7,175.9 38.0,175.5 40.4,174.8 42.7,173.7 45.0,172.1 47.3,170.3 49.7,168.4 52.0,166.5 54.3,164.9 56.6,163.6 59.0,162.2 61.3,160.9 63.6,159.6 65.9,158.1 68.3,156.5 70.6,155.0 72.9,153.5 75.2,152.1 77.6,150.8 79.9,149.7 82.2,148.8 84.5,148.2 86.9,147.9 89.2,147.6 91.5,147.4 93.8,147.0 96.2,146.7 98.5,146.6 100.8,146.9 103.1,148.0 105.5,149.9 107.8,152.5 110.1,155.4" fill="none" stroke="#e07a10" stroke-opacity="0.30" stroke-width="1.9" stroke-linejoin="round"/><polygon points="14.2,162.7 16.5,166.3 18.8,169.8 21.1,172.6 23.5,175.2 25.8,177.2 28.1,178.5 30.4,179.1 32.8,179.2 35.1,178.8 37.4,178.1 39.7,177.0 42.1,175.4 44.4,173.5 46.7,171.5 49.0,169.6 51.4,167.8 53.7,166.3 56.0,164.7 58.3,163.2 60.7,161.6 63.0,160.0 65.3,158.4 67.6,156.8 70.0,155.3 72.3,153.9 74.6,152.6 76.9,151.5 79.3,150.7 81.6,150.2 83.9,149.9 86.2,149.7 88.6,149.6 90.9,149.3 93.2,149.1 95.5,149.0 97.9,149.4 100.2,150.5 102.5,152.5 104.8,155.1 107.2,158.1 107.2,169.1 14.2,171.1" fill="#c8640a" fill-opacity="0.085"/><polyline points="14.2,162.7 16.5,166.3 18.8,169.8 21.1,172.6 23.5,175.2 25.8,177.2 28.1,178.5 30.4,179.1 32.8,179.2 35.1,178.8 37.4,178.1 39.7,177.0 42.1,175.4 44.4,173.5 46.7,171.5 49.0,169.6 51.4,167.8 53.7,166.3 56.0,164.7 58.3,163.2 60.7,161.6 63.0,160.0 65.3,158.4 67.6,156.8 70.0,155.3 72.3,153.9 74.6,152.6 76.9,151.5 79.3,150.7 81.6,150.2 83.9,149.9 86.2,149.7 88.6,149.6 90.9,149.3 93.2,149.1 95.5,149.0 97.9,149.4 100.2,150.5 102.5,152.5 104.8,155.1 107.2,158.1" fill="none" stroke="#e07a10" stroke-opacity="0.30" stroke-width="1.9" stroke-linejoin="round"/><polygon points="11.2,165.5 13.5,169.2 15.9,172.8 18.2,175.7 20.5,178.3 22.8,180.3 25.2,181.7 27.5,182.4 29.8,182.5 32.1,182.2 34.5,181.5 36.8,180.4 39.1,178.8 41.4,176.8 43.8,174.8 46.1,172.7 48.4,170.8 50.7,169.0 53.1,167.2 55.4,165.5 57.7,163.8 60.0,162.0 62.4,160.3 64.7,158.7 67.0,157.1 69.3,155.7 71.7,154.4 74.0,153.3 76.3,152.5 78.6,152.1 81.0,151.9 83.3,151.8 85.6,151.7 87.9,151.5 90.3,151.4 92.6,151.4 94.9,151.7 97.2,152.9 99.6,155.0 101.9,157.7 104.2,160.7 104.2,171.7 11.2,173.7" fill="#c8640a" fill-opacity="0.085"/><polyline points="11.2,165.5 13.5,169.2 15.9,172.8 18.2,175.7 20.5,178.3 22.8,180.3 25.2,181.7 27.5,182.4 29.8,182.5 32.1,182.2 34.5,181.5 36.8,180.4 39.1,178.8 41.4,176.8 43.8,174.8 46.1,172.7 48.4,170.8 50.7,169.0 53.1,167.2 55.4,165.5 57.7,163.8 60.0,162.0 62.4,160.3 64.7,158.7 67.0,157.1 69.3,155.7 71.7,154.4 74.0,153.3 76.3,152.5 78.6,152.1 81.0,151.9 83.3,151.8 85.6,151.7 87.9,151.5 90.3,151.4 92.6,151.4 94.9,151.7 97.2,152.9 99.6,155.0 101.9,157.7 104.2,160.7" fill="none" stroke="#e07a10" stroke-opacity="0.30" stroke-width="1.9" stroke-linejoin="round"/><polygon points="8.3,168.2 10.6,172.0 12.9,175.7 15.2,178.7 17.6,181.3 19.9,183.4 22.2,184.8 24.5,185.6 26.9,185.8 29.2,185.5 31.5,184.9 33.8,183.8 36.2,182.1 38.5,180.2 40.8,178.0 43.1,175.8 45.5,173.8 47.8,171.8 50.1,169.9 52.4,167.9 54.8,166.0 57.1,164.2 59.4,162.3 61.7,160.6 64.1,159.0 66.4,157.5 68.7,156.2 71.0,155.1 73.4,154.4 75.7,154.0 78.0,153.8 80.3,153.8 82.7,153.7 85.0,153.7 87.3,153.6 89.6,153.6 92.0,154.1 94.3,155.3 96.6,157.4 98.9,160.2 101.3,163.3 101.3,174.2 8.3,176.2" fill="#c8640a" fill-opacity="0.085"/><polyline points="8.3,168.2 10.6,172.0 12.9,175.7 15.2,178.7 17.6,181.3 19.9,183.4 22.2,184.8 24.5,185.6 26.9,185.8 29.2,185.5 31.5,184.9 33.8,183.8 36.2,182.1 38.5,180.2 40.8,178.0 43.1,175.8 45.5,173.8 47.8,171.8 50.1,169.9 52.4,167.9 54.8,166.0 57.1,164.2 59.4,162.3 61.7,160.6 64.1,159.0 66.4,157.5 68.7,156.2 71.0,155.1 73.4,154.4 75.7,154.0 78.0,153.8 80.3,153.8 82.7,153.7 85.0,153.7 87.3,153.6 89.6,153.6 92.0,154.1 94.3,155.3 96.6,157.4 98.9,160.2 101.3,163.3" fill="none" stroke="#e07a10" stroke-opacity="0.30" stroke-width="1.9" stroke-linejoin="round"/><polyline points="5.3,170.8 7.6,174.7 9.9,178.5 12.3,181.6 14.6,184.3 16.9,186.5 19.2,187.9 21.6,188.7 23.9,189.0 26.2,188.8 28.6,188.2 30.9,187.1 33.2,185.4 35.5,183.4 37.8,181.2 40.2,179.0 42.5,176.8 44.8,174.7 47.1,172.6 49.5,170.4 51.8,168.4 54.1,166.4 56.5,164.5 58.8,162.7 61.1,161.0 63.4,159.5 65.8,158.2 68.1,157.1 70.4,156.3 72.7,155.9 75.0,155.8 77.4,155.8 79.7,155.8 82.0,155.8 84.3,155.7 86.7,155.8 89.0,156.3 91.3,157.6 93.6,159.8 96.0,162.6 98.3,165.8" fill="none" stroke="#ffb04a" stroke-width="1.3" stroke-linejoin="round"/></svg>
<div class="a" style="left:4.5px;top:190px;width:160.5px;height:13px;background:#ff9a16"></div>
<div class="t" style="left:4.5px;top:192px;width:160.5px;text-align:center;font-size:10.5px;color:#2a1600">WAWT02</div>
<svg class="a" style="left:8px;top:192.5px" width="9" height="8"><path d="M8.5 0 L8.5 8 L0 4 Z" fill="#111"/></svg>
<svg class="a" style="left:152.5px;top:192.5px" width="9" height="8"><path d="M0 0 L0 8 L8.5 4 Z" fill="#111"/></svg>
<div class="a" style="left:4.5px;top:206.5px;width:50.5px;height:9.5px;background:#ff9a16;border-radius:1px"></div>
<div class="t b" style="left:4.5px;top:207.3px;width:50.5px;text-align:center;font-size:8.5px;color:#2a1600;letter-spacing:-0.05px">KEYTRACK</div>
<div class="t b" style="left:59px;top:207.3px;font-size:8.5px;color:#ff9a16;letter-spacing:-0.3px">RETRIGGER</div>
<div class="t b" style="left:1.4000000000000004px;top:224px;width:20px;text-align:center;font-size:9px;color:#ff9a16">-3</div>
<div class="t b" style="left:16.1px;top:224px;width:20px;text-align:center;font-size:9px;color:#ff9a16">-2</div>
<div class="t b" style="left:30.799999999999997px;top:224px;width:20px;text-align:center;font-size:9px;color:#ff9a16">-1</div>
<div class="t b" style="left:45.49999999999999px;top:224px;width:20px;text-align:center;font-size:9px;color:#ff9a16">0</div>
<div class="a" style="left:63.3px;top:221px;width:13.5px;height:14px;background:#ff9a16;border-radius:2px"></div>
<div class="t b" style="left:60.2px;top:224px;width:20px;text-align:center;font-size:9px;color:#fff">+1</div>
<div class="t b" style="left:74.9px;top:224px;width:20px;text-align:center;font-size:9px;color:#ff9a16">+2</div>
<div class="t b" style="left:89.6px;top:224px;width:20px;text-align:center;font-size:9px;color:#ff9a16">+3</div>
<div class="t b" style="left:124px;top:224px;width:20px;text-align:center;font-size:9px;color:#ff9a16">WT</div>
<svg class="a" style="left:157px;top:227px" width="6" height="4"><path d="M0 0 L6 0 L3 4 Z" fill="#ff9a16"/></svg>
<div class="a" style="left:0;top:240.5px;width:168px;height:210px;background:#333333"></div>
<div class="a" style="left:15px;top:251.5px;width:138.5px;height:3px;background:#1e1e1e;border-radius:1.5px"></div>
<div class="a" style="left:17px;top:252.5px;width:135px;height:1px;background:#6c6c6c"></div>
<div class="a" style="left:20.2px;top:254px;width:1.3px;height:5.0px;background:#191919"></div>
<div class="a" style="left:29.4px;top:254px;width:1.3px;height:4.3px;background:#191919"></div>
<div class="a" style="left:38.1px;top:254px;width:1.3px;height:3.6px;background:#191919"></div>
<div class="a" style="left:47.199999999999996px;top:254px;width:1.3px;height:2.9px;background:#191919"></div>
<div class="a" style="left:56.0px;top:254px;width:1.3px;height:2.2px;background:#191919"></div>
<div class="a" style="left:65.0px;top:254px;width:1.3px;height:1.5px;background:#191919"></div>
<div class="a" style="left:101.4px;top:250.5px;width:1.3px;height:1.5px;background:#191919"></div>
<div class="a" style="left:110.9px;top:249.8px;width:1.3px;height:2.2px;background:#191919"></div>
<div class="a" style="left:119.80000000000001px;top:249.0px;width:1.3px;height:3.0px;background:#191919"></div>
<div class="a" style="left:128.6px;top:248.2px;width:1.3px;height:3.8px;background:#191919"></div>
<div class="a" style="left:137.6px;top:247.5px;width:1.3px;height:4.5px;background:#191919"></div>
<div class="a" style="left:146.9px;top:246.8px;width:1.3px;height:5.2px;background:#191919"></div>
<div class="kn ko" style="left:78.4px;top:247px"><i></i></div>
<div class="sl" style="left:0;top:258.4px;width:146px">Pitch</div>
<div class="a" style="left:15px;top:276.5px;width:138.5px;height:3px;background:#151515;border-radius:1.5px"></div>
<div class="a" style="left:17px;top:277.5px;width:135px;height:1px;background:#264a98"></div>
<div class="a" style="left:20.2px;top:273px;width:1px;height:10px;background:#1c1c1c"></div>
<div class="a" style="left:148.5px;top:273px;width:1px;height:10px;background:#1c1c1c"></div>
<div class="kn ko" style="left:14.7px;top:272px"><i></i></div>
<div class="sl" style="left:0;top:283.0px;width:146px">Morph</div>
<div class="a" style="left:15px;top:301.5px;width:138.5px;height:3px;background:#151515;border-radius:1.5px"></div>
<div class="a" style="left:20.2px;top:298px;width:1px;height:10px;background:#1c1c1c"></div>
<div class="a" style="left:148.5px;top:298px;width:1px;height:10px;background:#1c1c1c"></div>
<div class="a" style="left:84px;top:299px;width:1px;height:8px;background:#1c1c1c"></div>
<div class="kn ko" style="left:92.8px;top:297px"><i></i></div>
<div class="sl" style="left:0;top:308.09999999999997px;width:146px">Skew Vertical</div>
<div class="a" style="left:15px;top:326.2px;width:138.5px;height:3px;background:#151515;border-radius:1.5px"></div>
<div class="a" style="left:17px;top:327.2px;width:135px;height:1px;background:#264a98"></div>
<div class="a" style="left:20.2px;top:322.7px;width:1px;height:10px;background:#1c1c1c"></div>
<div class="a" style="left:148.5px;top:322.7px;width:1px;height:10px;background:#1c1c1c"></div>
<div class="kn ko" style="left:81.5px;top:321.7px"><i></i></div>
<div class="sl" style="left:0;top:332.7px;width:146px">Saturate</div>
<div class="a" style="left:15px;top:351.0px;width:138.5px;height:3px;background:#1e1e1e;border-radius:1.5px"></div>
<div class="a" style="left:20.2px;top:347.5px;width:1px;height:10px;background:#1c1c1c"></div>
<div class="a" style="left:148.5px;top:347.5px;width:1px;height:10px;background:#1c1c1c"></div>
<div class="a" style="left:17px;top:352.0px;width:135px;height:1px;background:#6c6c6c"></div>
<div class="kn ko" style="left:14.7px;top:346.5px"><i></i></div>
<div class="sl" style="left:0;top:358.0px;width:146px">Formant</div>
<div class="a" style="left:15px;top:375.5px;width:138.5px;height:3px;background:#151515;border-radius:1.5px"></div>
<div class="a" style="left:17px;top:376.5px;width:135px;height:1px;background:#264a98"></div>
<div class="a" style="left:20.2px;top:372px;width:1px;height:10px;background:#1c1c1c"></div>
<div class="a" style="left:148.5px;top:372px;width:1px;height:10px;background:#1c1c1c"></div>
<div class="a" style="left:84px;top:373px;width:1px;height:8px;background:#1c1c1c"></div>
<div class="kn ko" style="left:78.4px;top:371px"><i></i></div>
<div class="sl" style="left:0;top:382.29999999999995px;width:146px">Skew Horizontal</div>
<div class="a" style="left:15px;top:400.7px;width:138.5px;height:3px;background:#151515;border-radius:1.5px"></div>
<div class="a" style="left:17px;top:401.7px;width:135px;height:1px;background:#264a98"></div>
<div class="a" style="left:20.2px;top:397.2px;width:1px;height:10px;background:#1c1c1c"></div>
<div class="a" style="left:148.5px;top:397.2px;width:1px;height:10px;background:#1c1c1c"></div>
<div class="kn ko" style="left:18.3px;top:396.2px"><i></i></div>
<div class="sl" style="left:0;top:407.59999999999997px;width:146px">Unison Detune</div>
<div class="a" style="left:15px;top:425.3px;width:138.5px;height:3px;background:#151515;border-radius:1.5px"></div>
<div class="a" style="left:20.2px;top:421.8px;width:1px;height:10px;background:#1c1c1c"></div>
<div class="a" style="left:148.5px;top:421.8px;width:1px;height:10px;background:#1c1c1c"></div>
<div class="kn ko" style="left:23.9px;top:420.8px"><i></i></div>
<div class="sl" style="left:0;top:432.2px;width:146px">Unison Voices</div>
<div class="a" style="left:168px;top:63.5px;width:9px;height:388px;background:#3a3a3a;border-left:1px solid #222"></div>
<div class="a" style="left:168px;top:65px;width:9px;height:23px;background:linear-gradient(#1c64c6,#103f84)"></div>
<div class="a" style="left:168px;top:88px;width:9px;height:128px;background:#3c3c3c"></div>
<div class="a" style="left:168px;top:216.5px;width:9px;height:24px;background:linear-gradient(#1c64c6,#103f84)"></div>
<div class="a" style="left:168px;top:294px;width:9px;height:1px;background:#222"></div>
<div class="a" style="left:0;top:449.5px;width:178px;height:86px;background:#141414"></div>
<div class="a" style="left:2.5px;top:452.3px;width:176px;height:81.5px;background:#0f2448"></div>
<div class="a" style="left:4.5px;top:453.5px;width:22.3px;height:79px;background:#143c80;border:1px solid #1a4892"></div>
<div class="t" style="left:4.5px;top:471.5px;width:22.5px;text-align:center;font-size:9.5px;color:#3f8fee">L</div>
<div class="t" style="left:4.5px;top:482.8px;width:22.5px;text-align:center;font-size:9.5px;color:#3f8fee">i</div>
<div class="t" style="left:4.5px;top:494.1px;width:22.5px;text-align:center;font-size:9.5px;color:#3f8fee">s</div>
<div class="t" style="left:4.5px;top:505.4px;width:22.5px;text-align:center;font-size:9.5px;color:#3f8fee">t</div>
<div class="a" style="left:29.3px;top:453.3px;width:100.7px;height:25.2px;background:#15397c;border:1px solid #4a8ed8"></div>
<div class="t b" style="left:29.5px;top:457.5px;width:100.5px;text-align:center;font-size:8.5px;color:#6aaef8;letter-spacing:-0.1px">Resonance (CC071)</div>
<div class="a" style="left:32px;top:469.3px;width:95.5px;height:6.7px;background:#1e56ad"></div>
<div class="a" style="left:32px;top:469.3px;width:53px;height:6.7px;background:#2d83f2"></div>
<div class="a" style="left:84.5px;top:469.3px;width:1.5px;height:6.7px;background:#9a9a9a"></div>
<div class="a" style="left:131.5px;top:453.5px;width:60px;height:25px;background:#15397c;border:1px solid #2a66b8"></div>
<div class="t b" style="left:164px;top:457.5px;font-size:8.5px;color:#3f8fee">Ma</div>
<div class="a" style="left:133.5px;top:469.3px;width:60px;height:6.7px;background:#1e56ad"></div>
<div class="a" style="left:133.5px;top:469.3px;width:1.5px;height:6.7px;background:#9a9a9a"></div>
<div class="a" style="left:29.5px;top:481px;width:80px;height:15.5px;background:#133574;border:1px solid #1d4f9e"></div>
<div class="t b" style="left:29.5px;top:484.5px;width:80px;text-align:center;font-size:8.5px;color:#3a86e8">Velocity</div>
<div class="a" style="left:111px;top:481px;width:80px;height:15.5px;background:#133574;border:1px solid #1d4f9e"></div>
<div class="t b" style="left:117.5px;top:484.5px;font-size:8.5px;color:#3a86e8">Release Velocity</div>
<div class="a" style="left:29.5px;top:499px;width:80px;height:15.5px;background:#15397c;border:1px solid #4a8ed8"></div>
<svg class="a" style="left:32.5px;top:502.5px" width="8" height="9"><path d="M0 1.5H7M0 4.5H7M0 7.5H7" stroke="#6aaef8" stroke-width="1.7"/></svg>
<div class="t b" style="left:29.5px;top:502.7px;width:80px;text-align:center;font-size:8.5px;color:#6aaef8">LFO 1</div>
<svg class="a" style="left:98px;top:503px" width="7" height="8"><path d="M3.5 1V6M1.3 3.8L3.5 6.4L5.7 3.8" stroke="#6aaef8" stroke-width="1.3" fill="none"/></svg>
<div class="a" style="left:111px;top:499px;width:80px;height:15.5px;background:#15397c;border:1px solid #4a8ed8"></div>
<svg class="a" style="left:114px;top:502.5px" width="8" height="9"><path d="M0 1.5H7M0 4.5H7M0 7.5H7" stroke="#6aaef8" stroke-width="1.7"/></svg>
<div class="t b" style="left:111px;top:502.7px;width:80px;text-align:center;font-size:8.5px;color:#6aaef8">LFO 2</div>
<div class="a" style="left:29.5px;top:517.5px;width:80px;height:15px;background:#133574;border:1px solid #1d4f9e"></div>
<svg class="a" style="left:32.5px;top:520.5px" width="8" height="9"><path d="M0 1.5H7M0 4.5H7M0 7.5H7" stroke="#24529c" stroke-width="1.7"/></svg>
<div class="t b" style="left:29.5px;top:520.7px;width:80px;text-align:center;font-size:8.5px;color:#3a86e8">S-LFO 1</div>
<svg class="a" style="left:98px;top:521px" width="7" height="8"><path d="M3.5 1V6M1.3 3.8L3.5 6.4L5.7 3.8" stroke="#3a86e8" stroke-width="1.3" fill="none"/></svg>
<div class="a" style="left:111px;top:517.5px;width:80px;height:15px;background:#133574;border:1px solid #1d4f9e"></div>
<svg class="a" style="left:114px;top:520.5px" width="8" height="9"><path d="M0 1.5H7M0 4.5H7M0 7.5H7" stroke="#24529c" stroke-width="1.7"/></svg>
<div class="t b" style="left:111px;top:520.7px;width:80px;text-align:center;font-size:8.5px;color:#3a86e8">S-LFO 2</div>
<div class="a" style="left:0;top:535px;width:178px;height:108px;background:#262626;border-top:1px solid #111"></div>
<div class="a" style="left:0;top:535px;width:26.5px;height:108px;background:#1c1c1c;border-right:1px solid #111;border-top:1px solid #111"></div>
<div class="a" style="left:7px;top:539.5px;width:11.5px;height:11.5px;background:#2a2a2a;border:1px solid #0e0e0e;border-radius:2px"></div>
<svg class="a" style="left:9.5px;top:542px" width="7" height="7"><path d="M0 1H6.5M0 3.3H6.5M0 5.6H6.5" stroke="#d8d8d8" stroke-width="1.2"/></svg>
<div class="t" style="left:0;top:571.5px;width:27px;text-align:center;font-size:9.5px;color:#c0c0c0">L</div>
<div class="t" style="left:0;top:582.5px;width:27px;text-align:center;font-size:9.5px;color:#c0c0c0">F</div>
<div class="t" style="left:0;top:594px;width:27px;text-align:center;font-size:9.5px;color:#c0c0c0">O</div>
<div class="t" style="left:0;top:611.5px;width:27px;text-align:center;font-size:9.5px;color:#c0c0c0">4</div>
<div class="a" style="left:40px;top:550.9px;width:140px;height:3px;background:#131313;border-radius:1.5px"></div>
<div class="a" style="left:45.2px;top:547.4px;width:1px;height:10px;background:#161616"></div>
<div class="a" style="left:172.0px;top:547.4px;width:1px;height:10px;background:#161616"></div>
<div class="kn kb" style="left:95px;top:546.4px"><i></i></div>
<div class="sl" style="left:20px;top:558.0px;width:150.5px">Rate</div>
<div class="a" style="left:40px;top:574.5px;width:140px;height:3px;background:#131313;border-radius:1.5px"></div>
<div class="a" style="left:45.2px;top:571px;width:1px;height:10px;background:#161616"></div>
<div class="a" style="left:172.0px;top:571px;width:1px;height:10px;background:#161616"></div>
<div class="kn kb" style="left:39.7px;top:570px"><i></i></div>
<div class="sl" style="left:20px;top:581.4px;width:150.5px">Phase</div>
<div class="a" style="left:40px;top:598.3px;width:140px;height:3px;background:#131313;border-radius:1.5px"></div>
<div class="a" style="left:45.2px;top:594.8px;width:1px;height:10px;background:#161616"></div>
<div class="a" style="left:172.0px;top:594.8px;width:1px;height:10px;background:#161616"></div>
<div class="kn kb" style="left:98.6px;top:593.8px"><i></i></div>
<div class="sl" style="left:20px;top:605.1px;width:150.5px">Deform</div>
<div class="a" style="left:40px;top:622.5px;width:140px;height:3px;background:#131313;border-radius:1.5px"></div>
<div class="a" style="left:45.2px;top:619px;width:1px;height:10px;background:#161616"></div>
<div class="a" style="left:172.0px;top:619px;width:1px;height:10px;background:#161616"></div>
<div class="kn kb" style="left:166.2px;top:618px"><i></i></div>
<div class="sl" style="left:20px;top:628.8000000000001px;width:150.5px">Amplitude</div>
<div class="a" style="left:840px;top:63.5px;width:182px;height:152px;background:#262626;border-top:1px solid #1a1a1a"></div>
<div class="a" style="left:840px;top:215.5px;width:182px;height:428px;background:#1a1a1a;border-top:1px solid #0e0e0e"></div>
<svg class="a" style="left:920px;top:74px" width="102" height="90" viewBox="920 80 102 90"><path d="M970.5 99.5H978.5V121 M920 112.7H978.5 M920 138H978.5V130 M970.5 150.3H978.5V138 M983 125.5H986V99.5H989.5 M970.5 125.5H974 M944 125.5H949 M944 99.5H949 M944 150.3H949" fill="none" stroke="#8c8c8c" stroke-width="1.2"/><path d="M933 112.7V119.5 M933 138V131" stroke="#8c8c8c" stroke-width="1.2"/><path d="M931 116.5L933 119.5L935 116.5Z M931 134L933 131L935 134Z" fill="#8c8c8c"/><path d="M959.5 112.7V119.5 M959.5 138V131" stroke="#8c8c8c" stroke-width="1.2"/><path d="M957.5 116.5L959.5 119.5L961.5 116.5Z M957.5 134L959.5 131L961.5 134Z" fill="#8c8c8c"/><path d="M946 97.5L949 99.5L946 101.5Z" fill="#8c8c8c"/><path d="M946 123.5L949 125.5L946 127.5Z" fill="#8c8c8c"/><path d="M946 148.3L949 150.3L946 152.3Z" fill="#8c8c8c"/><path d="M976.5 118L978.5 121L980.5 118Z M976.5 133L978.5 130L980.5 133Z M987 97.5L989.5 99.5L987 101.5Z M971.5 123.5L974 125.5L971.5 127.5Z" fill="#8c8c8c"/><path d="M1000.3 105.5V111 M1000.3 122V128 M1000.3 139V144.5" stroke="#8c8c8c" stroke-width="1.2"/><path d="M998.3 107L1000.3 110L1002.3 107Z" fill="#8c8c8c"/><path d="M998.3 124L1000.3 127L1002.3 124Z" fill="#8c8c8c"/><path d="M998.3 141L1000.3 144L1002.3 141Z" fill="#8c8c8c"/><circle cx="978.5" cy="125.5" r="4.3" fill="#262626" stroke="#8c8c8c" stroke-width="1.2"/><path d="M976.3 125.5H980.7M978.5 123.3V127.7" stroke="#747474" stroke-width="0.9"/><rect x="923" y="93.6" width="21" height="11.8" fill="#262626" stroke="#8c8c8c" stroke-width="1.3"/><rect x="949" y="93.6" width="21.5" height="11.8" fill="#262626" stroke="#8c8c8c" stroke-width="1.3"/><rect x="989.6" y="93.6" width="21.5" height="11.8" fill="#262626" stroke="#8c8c8c" stroke-width="1.3"/><rect x="923" y="119.7" width="21" height="11.4" fill="#262626" stroke="#8c8c8c" stroke-width="1.3"/><rect x="949" y="119.7" width="21.5" height="11.4" fill="#262626" stroke="#8c8c8c" stroke-width="1.3"/><rect x="923" y="144.5" width="21" height="11.6" fill="#262626" stroke="#8c8c8c" stroke-width="1.3"/><rect x="949" y="144.5" width="21.5" height="11.6" fill="#262626" stroke="#8c8c8c" stroke-width="1.3"/><rect x="989.6" y="110.9" width="21.5" height="11.2" fill="#262626" stroke="#8c8c8c" stroke-width="1.3"/><rect x="989.6" y="127.7" width="21.5" height="11.3" fill="#262626" stroke="#8c8c8c" stroke-width="1.3"/><rect x="989.6" y="144.5" width="21.5" height="11.6" fill="#262626" stroke="#8c8c8c" stroke-width="1.3"/><path d="M930.5 125.5H936.5" stroke="#eee" stroke-width="1.5"/><path d="M956.7 125.5H962.7" stroke="#eee" stroke-width="1.5"/><path d="M930.5 150.3H936.5" stroke="#eee" stroke-width="1.5"/><path d="M956.7 150.3H962.7" stroke="#eee" stroke-width="1.5"/><path d="M997.3 116.5H1003.3" stroke="#eee" stroke-width="1.5"/><path d="M997.3 133.3H1003.3" stroke="#eee" stroke-width="1.5"/><path d="M997.3 150.3H1003.3" stroke="#eee" stroke-width="1.5"/><g font-family="Liberation Sans, sans-serif" font-size="8.6" fill="#e6e6e6" text-anchor="middle" letter-spacing="-0.35"><text x="934.3" y="102.7">CH</text><text x="959.5" y="102.7">DLY</text><text x="1000.2" y="102.7">DYN</text></g></svg>
<div class="a" style="left:870px;top:170.5px;width:132px;height:3px;background:#171717;border-radius:1.5px"></div>
<div class="kn kg" style="left:993px;top:166.0px"><i></i></div>
<div class="fl" style="left:850px;top:176.8px;width:147px;font-size:10.2px;line-height:11px">Send FX 1 Return</div>
<div class="a" style="left:870px;top:194.5px;width:132px;height:3px;background:#171717;border-radius:1.5px"></div>
<div class="kn kg" style="left:993px;top:190.0px"><i></i></div>
<div class="fl" style="left:850px;top:200.5px;width:147px;font-size:10.2px;line-height:11px">Send FX 2 Return</div>
<div class="a" style="left:860px;top:221px;width:147.5px;height:17.5px;background:linear-gradient(#3e3e3e,#2f2f2f);border:1px solid #0f0f0f;border-radius:3px"></div>
<div class="t" style="left:880px;top:225px;width:115.5px;text-align:right;font-size:10.2px;color:#b8b8b8">Reverb 1</div>
<svg class="a" style="left:998.0px;top:228.45px" width="6" height="4"><path d="M0 0H5.2L2.6 3.6Z" fill="#dcdcdc"/></svg>
<div class="fl" style="left:850px;top:243px;width:115px;font-size:10.2px;line-height:11px">Cathedral 1</div>
<div class="a" style="left:971px;top:241px;width:36.5px;height:14px;background:#202020;border:1px solid #0a0a0a;border-radius:3px"></div>
<div class="a" style="left:989px;top:242.5px;width:1px;height:11px;background:#121212"></div>
<svg class="a" style="left:975px;top:244.3px" width="30" height="8"><path d="M1.6 4H9.8M1.2 4L4.6 1.3V6.7Z M18.6 4H26.8M27.4 4L24 1.3V6.7Z" stroke="#d4d4d4" stroke-width="1.5" fill="#d4d4d4" stroke-linejoin="round"/></svg>
<div class="a" style="left:860px;top:263.2px;width:147.5px;height:2.5px;background:#585858"></div>
<div class="a" style="left:860px;top:309px;width:147.5px;height:2.5px;background:#585858"></div>
<div class="a" style="left:860px;top:422px;width:147.5px;height:2.5px;background:#585858"></div>
<div class="a" style="left:860px;top:535px;width:147.5px;height:2.5px;background:#585858"></div>
<div class="a" style="left:860px;top:277.2px;width:143px;height:2.5px;background:#0d0d0d;border-radius:1px"></div>
<div class="a" style="left:997.5px;top:274.2px;width:1px;height:8px;background:#0d0d0d"></div>
<div class="fl" style="left:850px;top:282.2px;width:146px;font-size:10.2px;line-height:11px;color:#b4b4b4">Pre-Delay</div>
<div class="a" style="left:860px;top:316px;width:147px;height:17.5px;background:linear-gradient(#3e3e3e,#2f2f2f);border:1px solid #0f0f0f;border-radius:3px"></div>
<div class="t" style="left:880px;top:320px;width:115px;text-align:right;font-size:10.2px;color:#b8b8b8">Type 3</div>
<svg class="a" style="left:997.5px;top:323.45px" width="6" height="4"><path d="M0 0H5.2L2.6 3.6Z" fill="#dcdcdc"/></svg>
<div class="a" style="left:860px;top:344.2px;width:143px;height:2.5px;background:#0d0d0d;border-radius:1px"></div>
<div class="a" style="left:997.5px;top:341.2px;width:1px;height:8px;background:#0d0d0d"></div>
<div class="kn kg" style="left:991.6px;top:339.2px"><i></i></div>
<div class="fl" style="left:850px;top:349.5px;width:146px;font-size:10.2px;line-height:11px;color:#b4b4b4">Size</div>
<div class="a" style="left:860px;top:367.2px;width:143px;height:2.5px;background:#0d0d0d;border-radius:1px"></div>
<div class="a" style="left:997.5px;top:364.2px;width:1px;height:8px;background:#0d0d0d"></div>
<div class="kn kg" style="left:936.4px;top:362.2px"><i></i></div>
<div class="fl" style="left:850px;top:372.3px;width:146px;font-size:10.2px;line-height:11px;color:#b4b4b4">Decay Time</div>
<div class="a" style="left:860px;top:389.5px;width:143px;height:2.5px;background:#0d0d0d;border-radius:1px"></div>
<div class="a" style="left:997.5px;top:386.5px;width:1px;height:8px;background:#0d0d0d"></div>
<div class="kn kg" style="left:960.2px;top:384.5px"><i></i></div>
<div class="fl" style="left:850px;top:395.1px;width:146px;font-size:10.2px;line-height:11px;color:#b4b4b4">HF Damping</div>
<div class="a" style="left:860px;top:435px;width:143px;height:2.5px;background:#0d0d0d;border-radius:1px"></div>
<div class="a" style="left:997.5px;top:432px;width:1px;height:8px;background:#0d0d0d"></div>
<div class="fl" style="left:850px;top:439.5px;width:146px;font-size:10.2px;line-height:11px;color:#b4b4b4">Low Cut</div>
<div class="a" style="left:860px;top:457.4px;width:143px;height:2.5px;background:#0d0d0d;border-radius:1px"></div>
<div class="a" style="left:997.5px;top:454.4px;width:1px;height:8px;background:#0d0d0d"></div>
<div class="kn kg" style="left:926px;top:452.4px"><i></i></div>
<div class="fl" style="left:850px;top:462.5px;width:146px;font-size:10.2px;line-height:11px;color:#b4b4b4">Peak Freq</div>
<div class="a" style="left:860px;top:480.3px;width:143px;height:2.5px;background:#0d0d0d;border-radius:1px"></div>
<div class="a" style="left:997.5px;top:477.3px;width:1px;height:8px;background:#0d0d0d"></div>
<div class="fl" style="left:850px;top:485.5px;width:146px;font-size:10.2px;line-height:11px;color:#b4b4b4">Peak Gain</div>
<div class="a" style="left:860px;top:502.5px;width:143px;height:2.5px;background:#0d0d0d;border-radius:1px"></div>
<div class="a" style="left:997.5px;top:499.5px;width:1px;height:8px;background:#0d0d0d"></div>
<div class="kn kg" style="left:970px;top:497.5px"><i></i></div>
<div class="fl" style="left:850px;top:508.5px;width:146px;font-size:10.2px;line-height:11px;color:#b4b4b4">High Cut</div>
<div class="a" style="left:860px;top:546.5px;width:143px;height:2.5px;background:#0d0d0d;border-radius:1px"></div>
<div class="a" style="left:997.5px;top:543.5px;width:1px;height:8px;background:#0d0d0d"></div>
<div class="kn kg" style="left:976.5px;top:541.5px"><i></i></div>
<div class="fl" style="left:850px;top:553.5px;width:146px;font-size:10.2px;line-height:11px;color:#b4b4b4">Width</div>
<div class="a" style="left:860px;top:571px;width:143px;height:2.5px;background:#0d0d0d;border-radius:1px"></div>
<div class="a" style="left:997.5px;top:568px;width:1px;height:8px;background:#0d0d0d"></div>
<div class="fl" style="left:850px;top:576.5px;width:146px;font-size:10.2px;line-height:11px;color:#b4b4b4">Mix</div>
<div class="a" style="left:961px;top:622px;width:56px;height:16.5px;background:#2a2a2a;border:1px solid #0c0c0c;border-radius:3.5px"></div>
<svg class="a" style="left:966.8px;top:625.8px" width="10" height="10"><rect width="9.4" height="9.2" fill="#f09a2a"/><path d="M1.2 3.4L3.4 2.2L5 3.6L7.8 1.8 M1.4 7.2L4 5.4L5.6 6.8L8.2 5.2" stroke="#5a2600" stroke-width="1.5" fill="none"/></svg>
<div class="t b" style="left:980px;top:625.3px;font-size:11px;color:#bdbdbd;letter-spacing:-0.2px">Menu</div>
</div>
<div class="a" style="left:178px;top:52px;width:752px;height:699.5px;background:#303030;box-shadow:0 2px 7px rgba(0,0,0,.45)"></div>
<div class="a" style="left:177px;top:52px;width:754px;height:1px;background:#8c8c8c"></div>
<div class="a" style="left:177px;top:52px;width:1px;height:597px;background:#8c8c8c"></div>
<div class="a" style="left:930px;top:52px;width:1px;height:597px;background:#8c8c8c"></div>
<div class="mh" style="left:190.3px;top:63px">FACTORY PATCHES</div>
<div class="mh" style="left:361.3px;top:63px">THIRD PARTY PATCHES</div>
<div class="mh" style="left:557.3px;top:63px;letter-spacing:-0.65px">USER PATCHES</div>
<div class="mh" style="left:700.3px;top:63px">FUNCTIONS</div>
<div class="mi" style="left:197.8px;top:90.3px;letter-spacing:-0.90px">Basses</div>
<svg class="a" style="left:319.7px;top:90.19999999999999px" width="8" height="12" viewBox="0 0 8 12"><path d="M1.4 1.9L6.3 6L1.4 10.1" fill="none" stroke="#fff" stroke-width="1.9" stroke-linejoin="miter"/></svg>
<div class="mi" style="left:197.8px;top:111.1px;letter-spacing:-0.75px">Brass</div>
<svg class="a" style="left:319.7px;top:110.99999999999999px" width="8" height="12" viewBox="0 0 8 12"><path d="M1.4 1.9L6.3 6L1.4 10.1" fill="none" stroke="#fff" stroke-width="1.9" stroke-linejoin="miter"/></svg>
<div class="mi" style="left:197.8px;top:131.9px;letter-spacing:-0.47px">Chords</div>
<svg class="a" style="left:319.7px;top:131.79999999999998px" width="8" height="12" viewBox="0 0 8 12"><path d="M1.4 1.9L6.3 6L1.4 10.1" fill="none" stroke="#fff" stroke-width="1.9" stroke-linejoin="miter"/></svg>
<div class="mi" style="left:197.8px;top:152.7px;letter-spacing:-0.52px">FX</div>
<svg class="a" style="left:319.7px;top:152.6px" width="8" height="12" viewBox="0 0 8 12"><path d="M1.4 1.9L6.3 6L1.4 10.1" fill="none" stroke="#fff" stroke-width="1.9" stroke-linejoin="miter"/></svg>
<div class="mi" style="left:197.8px;top:173.5px;letter-spacing:-0.62px">Keys</div>
<svg class="a" style="left:319.7px;top:173.4px" width="8" height="12" viewBox="0 0 8 12"><path d="M1.4 1.9L6.3 6L1.4 10.1" fill="none" stroke="#fff" stroke-width="1.9" stroke-linejoin="miter"/></svg>
<div class="mi" style="left:197.8px;top:194.3px;letter-spacing:-0.90px">Leads</div>
<svg class="a" style="left:319.7px;top:194.2px" width="8" height="12" viewBox="0 0 8 12"><path d="M1.4 1.9L6.3 6L1.4 10.1" fill="none" stroke="#fff" stroke-width="1.9" stroke-linejoin="miter"/></svg>
<div class="mi" style="left:197.8px;top:215.1px;letter-spacing:-0.75px">MPE</div>
<svg class="a" style="left:319.7px;top:215.0px" width="8" height="12" viewBox="0 0 8 12"><path d="M1.4 1.9L6.3 6L1.4 10.1" fill="none" stroke="#fff" stroke-width="1.9" stroke-linejoin="miter"/></svg>
<div class="mi" style="left:197.8px;top:235.9px;letter-spacing:-0.90px">Pads</div>
<svg class="a" style="left:319.7px;top:235.79999999999998px" width="8" height="12" viewBox="0 0 8 12"><path d="M1.4 1.9L6.3 6L1.4 10.1" fill="none" stroke="#fff" stroke-width="1.9" stroke-linejoin="miter"/></svg>
<div class="mi" style="left:197.8px;top:256.7px;letter-spacing:-0.48px">Percussion</div>
<svg class="a" style="left:319.7px;top:256.6px" width="8" height="12" viewBox="0 0 8 12"><path d="M1.4 1.9L6.3 6L1.4 10.1" fill="none" stroke="#fff" stroke-width="1.9" stroke-linejoin="miter"/></svg>
<div class="mi" style="left:197.8px;top:277.5px;letter-spacing:-0.62px">Plucks</div>
<svg class="a" style="left:319.7px;top:277.40000000000003px" width="8" height="12" viewBox="0 0 8 12"><path d="M1.4 1.9L6.3 6L1.4 10.1" fill="none" stroke="#fff" stroke-width="1.9" stroke-linejoin="miter"/></svg>
<div class="mi" style="left:197.8px;top:298.3px;letter-spacing:-0.33px">Polysynths</div>
<svg class="a" style="left:319.7px;top:298.20000000000005px" width="8" height="12" viewBox="0 0 8 12"><path d="M1.4 1.9L6.3 6L1.4 10.1" fill="none" stroke="#fff" stroke-width="1.9" stroke-linejoin="miter"/></svg>
<div class="mi" style="left:197.8px;top:319.1px;letter-spacing:-0.68px">Sequences</div>
<svg class="a" style="left:319.7px;top:319.0px" width="8" height="12" viewBox="0 0 8 12"><path d="M1.4 1.9L6.3 6L1.4 10.1" fill="none" stroke="#fff" stroke-width="1.9" stroke-linejoin="miter"/></svg>
<div class="mi" style="left:197.8px;top:339.9px;letter-spacing:-0.10px">Splits</div>
<svg class="a" style="left:319.7px;top:339.80000000000007px" width="8" height="12" viewBox="0 0 8 12"><path d="M1.4 1.9L6.3 6L1.4 10.1" fill="none" stroke="#fff" stroke-width="1.9" stroke-linejoin="miter"/></svg>
<div class="mi" style="left:197.8px;top:360.7px;letter-spacing:-0.35px">Templates</div>
<svg class="a" style="left:319.7px;top:360.6px" width="8" height="12" viewBox="0 0 8 12"><path d="M1.4 1.9L6.3 6L1.4 10.1" fill="none" stroke="#fff" stroke-width="1.9" stroke-linejoin="miter"/></svg>
<div class="mi" style="left:197.8px;top:381.5px;letter-spacing:-0.32px">Vocoder</div>
<svg class="a" style="left:319.7px;top:381.4px" width="8" height="12" viewBox="0 0 8 12"><path d="M1.4 1.9L6.3 6L1.4 10.1" fill="none" stroke="#fff" stroke-width="1.9" stroke-linejoin="miter"/></svg>
<div class="mi" style="left:197.8px;top:402.3px;letter-spacing:-0.20px">Winds</div>
<svg class="a" style="left:319.7px;top:402.20000000000005px" width="8" height="12" viewBox="0 0 8 12"><path d="M1.4 1.9L6.3 6L1.4 10.1" fill="none" stroke="#fff" stroke-width="1.9" stroke-linejoin="miter"/></svg>
<div class="mi" style="left:368.3px;top:90.3px;letter-spacing:-0.32px">A.Liv</div>
<svg class="a" style="left:515.8px;top:90.19999999999999px" width="8" height="12" viewBox="0 0 8 12"><path d="M1.4 1.9L6.3 6L1.4 10.1" fill="none" stroke="#fff" stroke-width="1.9" stroke-linejoin="miter"/></svg>
<div class="mi" style="left:368.3px;top:111.1px;letter-spacing:-0.11px">Altenberg</div>
<svg class="a" style="left:515.8px;top:110.99999999999999px" width="8" height="12" viewBox="0 0 8 12"><path d="M1.4 1.9L6.3 6L1.4 10.1" fill="none" stroke="#fff" stroke-width="1.9" stroke-linejoin="miter"/></svg>
<div class="mi" style="left:368.3px;top:131.9px;letter-spacing:0.16px">Argitoth</div>
<svg class="a" style="left:515.8px;top:131.79999999999998px" width="8" height="12" viewBox="0 0 8 12"><path d="M1.4 1.9L6.3 6L1.4 10.1" fill="none" stroke="#fff" stroke-width="1.9" stroke-linejoin="miter"/></svg>
<div class="mi" style="left:368.3px;top:152.7px;letter-spacing:-0.15px">Bluelight</div>
<svg class="a" style="left:515.8px;top:152.6px" width="8" height="12" viewBox="0 0 8 12"><path d="M1.4 1.9L6.3 6L1.4 10.1" fill="none" stroke="#fff" stroke-width="1.9" stroke-linejoin="miter"/></svg>
<div class="mi" style="left:368.3px;top:173.5px;letter-spacing:-0.46px">Cybersoda</div>
<svg class="a" style="left:515.8px;top:173.4px" width="8" height="12" viewBox="0 0 8 12"><path d="M1.4 1.9L6.3 6L1.4 10.1" fill="none" stroke="#fff" stroke-width="1.9" stroke-linejoin="miter"/></svg>
<div class="mi" style="left:368.3px;top:194.3px;letter-spacing:-0.18px">Damon Armani</div>
<svg class="a" style="left:515.8px;top:194.2px" width="8" height="12" viewBox="0 0 8 12"><path d="M1.4 1.9L6.3 6L1.4 10.1" fill="none" stroke="#fff" stroke-width="1.9" stroke-linejoin="miter"/></svg>
<div class="mi" style="left:368.3px;top:215.1px;letter-spacing:-0.23px">Dan Maurer</div>
<svg class="a" style="left:515.8px;top:215.0px" width="8" height="12" viewBox="0 0 8 12"><path d="M1.4 1.9L6.3 6L1.4 10.1" fill="none" stroke="#fff" stroke-width="1.9" stroke-linejoin="miter"/></svg>
<div class="mi" style="left:368.3px;top:235.9px;letter-spacing:-0.04px">Databroth</div>
<svg class="a" style="left:515.8px;top:235.79999999999998px" width="8" height="12" viewBox="0 0 8 12"><path d="M1.4 1.9L6.3 6L1.4 10.1" fill="none" stroke="#fff" stroke-width="1.9" stroke-linejoin="miter"/></svg>
<div class="mi" style="left:368.3px;top:256.7px;letter-spacing:-0.78px">Emu</div>
<svg class="a" style="left:515.8px;top:256.6px" width="8" height="12" viewBox="0 0 8 12"><path d="M1.4 1.9L6.3 6L1.4 10.1" fill="none" stroke="#fff" stroke-width="1.9" stroke-linejoin="miter"/></svg>
<div class="mi" style="left:368.3px;top:277.5px;letter-spacing:-0.25px">Giana Brotherz</div>
<svg class="a" style="left:515.8px;top:277.40000000000003px" width="8" height="12" viewBox="0 0 8 12"><path d="M1.4 1.9L6.3 6L1.4 10.1" fill="none" stroke="#fff" stroke-width="1.9" stroke-linejoin="miter"/></svg>
<div class="mi" style="left:368.3px;top:298.3px;letter-spacing:-0.24px">Inigo Kennedy</div>
<svg class="a" style="left:515.8px;top:298.20000000000005px" width="8" height="12" viewBox="0 0 8 12"><path d="M1.4 1.9L6.3 6L1.4 10.1" fill="none" stroke="#fff" stroke-width="1.9" stroke-linejoin="miter"/></svg>
<div class="mi" style="left:368.3px;top:319.1px;letter-spacing:-0.30px">Jacky Ligon</div>
<svg class="a" style="left:515.8px;top:319.0px" width="8" height="12" viewBox="0 0 8 12"><path d="M1.4 1.9L6.3 6L1.4 10.1" fill="none" stroke="#fff" stroke-width="1.9" stroke-linejoin="miter"/></svg>
<div class="mi" style="left:368.3px;top:339.9px;letter-spacing:-0.19px">John Valentine</div>
<svg class="a" style="left:515.8px;top:339.80000000000007px" width="8" height="12" viewBox="0 0 8 12"><path d="M1.4 1.9L6.3 6L1.4 10.1" fill="none" stroke="#fff" stroke-width="1.9" stroke-linejoin="miter"/></svg>
<div class="mi" style="left:368.3px;top:360.7px;letter-spacing:-0.21px">Kinsey Dulcet</div>
<svg class="a" style="left:515.8px;top:360.6px" width="8" height="12" viewBox="0 0 8 12"><path d="M1.4 1.9L6.3 6L1.4 10.1" fill="none" stroke="#fff" stroke-width="1.9" stroke-linejoin="miter"/></svg>
<div class="mi" style="left:368.3px;top:381.5px;letter-spacing:-0.07px">Kuniklo</div>
<svg class="a" style="left:515.8px;top:381.4px" width="8" height="12" viewBox="0 0 8 12"><path d="M1.4 1.9L6.3 6L1.4 10.1" fill="none" stroke="#fff" stroke-width="1.9" stroke-linejoin="miter"/></svg>
<div class="mi" style="left:368.3px;top:402.3px;letter-spacing:-0.11px">Kyurumi</div>
<svg class="a" style="left:515.8px;top:402.20000000000005px" width="8" height="12" viewBox="0 0 8 12"><path d="M1.4 1.9L6.3 6L1.4 10.1" fill="none" stroke="#fff" stroke-width="1.9" stroke-linejoin="miter"/></svg>
<div class="mi" style="left:368.3px;top:423.1px;letter-spacing:-0.39px">Landosonic</div>
<svg class="a" style="left:515.8px;top:423.0px" width="8" height="12" viewBox="0 0 8 12"><path d="M1.4 1.9L6.3 6L1.4 10.1" fill="none" stroke="#fff" stroke-width="1.9" stroke-linejoin="miter"/></svg>
<div class="mi" style="left:368.3px;top:443.9px;letter-spacing:-0.15px">LinnStrument MPE</div>
<svg class="a" style="left:515.8px;top:443.80000000000007px" width="8" height="12" viewBox="0 0 8 12"><path d="M1.4 1.9L6.3 6L1.4 10.1" fill="none" stroke="#fff" stroke-width="1.9" stroke-linejoin="miter"/></svg>
<div class="mi" style="left:368.3px;top:464.7px;letter-spacing:-0.59px">Luna</div>
<svg class="a" style="left:515.8px;top:464.6px" width="8" height="12" viewBox="0 0 8 12"><path d="M1.4 1.9L6.3 6L1.4 10.1" fill="none" stroke="#fff" stroke-width="1.9" stroke-linejoin="miter"/></svg>
<div class="mi" style="left:368.3px;top:485.5px;letter-spacing:0.00px">Malfunction</div>
<svg class="a" style="left:515.8px;top:485.4px" width="8" height="12" viewBox="0 0 8 12"><path d="M1.4 1.9L6.3 6L1.4 10.1" fill="none" stroke="#fff" stroke-width="1.9" stroke-linejoin="miter"/></svg>
<div class="mi" style="left:368.3px;top:506.3px;letter-spacing:0.02px">Nick Moritz</div>
<svg class="a" style="left:515.8px;top:506.20000000000005px" width="8" height="12" viewBox="0 0 8 12"><path d="M1.4 1.9L6.3 6L1.4 10.1" fill="none" stroke="#fff" stroke-width="1.9" stroke-linejoin="miter"/></svg>
<div class="mi" style="left:368.3px;top:527.1px;letter-spacing:-0.51px">Noisegeek</div>
<svg class="a" style="left:515.8px;top:527.0px" width="8" height="12" viewBox="0 0 8 12"><path d="M1.4 1.9L6.3 6L1.4 10.1" fill="none" stroke="#fff" stroke-width="1.9" stroke-linejoin="miter"/></svg>
<div class="mi" style="left:368.3px;top:547.9px;letter-spacing:-0.39px">Psiome Send Sound</div>
<svg class="a" style="left:515.8px;top:547.8000000000001px" width="8" height="12" viewBox="0 0 8 12"><path d="M1.4 1.9L6.3 6L1.4 10.1" fill="none" stroke="#fff" stroke-width="1.9" stroke-linejoin="miter"/></svg>
<div class="mi" style="left:368.3px;top:568.7px;letter-spacing:-0.36px">Rare Earth</div>
<svg class="a" style="left:515.8px;top:568.6px" width="8" height="12" viewBox="0 0 8 12"><path d="M1.4 1.9L6.3 6L1.4 10.1" fill="none" stroke="#fff" stroke-width="1.9" stroke-linejoin="miter"/></svg>
<div class="mi" style="left:368.3px;top:589.5px;letter-spacing:-0.34px">Rozzer</div>
<svg class="a" style="left:515.8px;top:589.4000000000001px" width="8" height="12" viewBox="0 0 8 12"><path d="M1.4 1.9L6.3 6L1.4 10.1" fill="none" stroke="#fff" stroke-width="1.9" stroke-linejoin="miter"/></svg>
<div class="mi" style="left:368.3px;top:610.3px;letter-spacing:-0.11px">Slowboat</div>
<svg class="a" style="left:515.8px;top:610.2px" width="8" height="12" viewBox="0 0 8 12"><path d="M1.4 1.9L6.3 6L1.4 10.1" fill="none" stroke="#fff" stroke-width="1.9" stroke-linejoin="miter"/></svg>
<div class="mi" style="left:368.3px;top:631.1px;letter-spacing:-0.17px">Stefan Singer</div>
<svg class="a" style="left:515.8px;top:631.0000000000001px" width="8" height="12" viewBox="0 0 8 12"><path d="M1.4 1.9L6.3 6L1.4 10.1" fill="none" stroke="#fff" stroke-width="1.9" stroke-linejoin="miter"/></svg>
<div class="mi" style="left:368.3px;top:651.9px;letter-spacing:-0.14px">TNMG</div>
<svg class="a" style="left:515.8px;top:651.8000000000001px" width="8" height="12" viewBox="0 0 8 12"><path d="M1.4 1.9L6.3 6L1.4 10.1" fill="none" stroke="#fff" stroke-width="1.9" stroke-linejoin="miter"/></svg>
<div class="mi" style="left:368.3px;top:672.7px;letter-spacing:-0.24px">Vincent Zauhar</div>
<svg class="a" style="left:515.8px;top:672.6px" width="8" height="12" viewBox="0 0 8 12"><path d="M1.4 1.9L6.3 6L1.4 10.1" fill="none" stroke="#fff" stroke-width="1.9" stroke-linejoin="miter"/></svg>
<div class="mi" style="left:368.3px;top:693.5px;letter-spacing:-0.22px">Vospi</div>
<svg class="a" style="left:515.8px;top:693.4000000000001px" width="8" height="12" viewBox="0 0 8 12"><path d="M1.4 1.9L6.3 6L1.4 10.1" fill="none" stroke="#fff" stroke-width="1.9" stroke-linejoin="miter"/></svg>
<div class="mi" style="left:368.3px;top:714.3px;letter-spacing:-0.24px">Xenofish</div>
<svg class="a" style="left:515.8px;top:714.2px" width="8" height="12" viewBox="0 0 8 12"><path d="M1.4 1.9L6.3 6L1.4 10.1" fill="none" stroke="#fff" stroke-width="1.9" stroke-linejoin="miter"/></svg>
<div class="mi" style="left:368.3px;top:735.1px;letter-spacing:-0.09px">Zoozither</div>
<svg class="a" style="left:515.8px;top:735.0000000000001px" width="8" height="12" viewBox="0 0 8 12"><path d="M1.4 1.9L6.3 6L1.4 10.1" fill="none" stroke="#fff" stroke-width="1.9" stroke-linejoin="miter"/></svg>
<div class="mi" style="left:564.8px;top:90.3px;letter-spacing:-0.32px">Favorites</div>
<svg class="a" style="left:659px;top:90.2px" width="8" height="12" viewBox="0 0 8 12"><path d="M1.4 1.9L6.3 6L1.4 10.1" fill="none" stroke="#fff" stroke-width="1.9" stroke-linejoin="miter"/></svg>
<div class="sep" style="left:549px;top:110.4px;width:134px"></div>
<div class="mi" style="left:564.8px;top:120.0px;letter-spacing:-0.90px">Basses</div>
<svg class="a" style="left:659px;top:119.89999999999999px" width="8" height="12" viewBox="0 0 8 12"><path d="M1.4 1.9L6.3 6L1.4 10.1" fill="none" stroke="#fff" stroke-width="1.9" stroke-linejoin="miter"/></svg>
<div class="mi" style="left:564.8px;top:140.8px;letter-spacing:-0.52px">FX</div>
<svg class="a" style="left:659px;top:140.7px" width="8" height="12" viewBox="0 0 8 12"><path d="M1.4 1.9L6.3 6L1.4 10.1" fill="none" stroke="#fff" stroke-width="1.9" stroke-linejoin="miter"/></svg>
<div class="mi" style="left:564.8px;top:161.6px;letter-spacing:-0.90px">Leads</div>
<svg class="a" style="left:659px;top:161.5px" width="8" height="12" viewBox="0 0 8 12"><path d="M1.4 1.9L6.3 6L1.4 10.1" fill="none" stroke="#fff" stroke-width="1.9" stroke-linejoin="miter"/></svg>
<div class="mi" style="left:564.8px;top:182.4px;letter-spacing:-0.90px">Pads</div>
<svg class="a" style="left:659px;top:182.29999999999998px" width="8" height="12" viewBox="0 0 8 12"><path d="M1.4 1.9L6.3 6L1.4 10.1" fill="none" stroke="#fff" stroke-width="1.9" stroke-linejoin="miter"/></svg>
<div class="mi" style="left:564.8px;top:203.2px;letter-spacing:-0.33px">Polysynths</div>
<svg class="a" style="left:659px;top:203.1px" width="8" height="12" viewBox="0 0 8 12"><path d="M1.4 1.9L6.3 6L1.4 10.1" fill="none" stroke="#fff" stroke-width="1.9" stroke-linejoin="miter"/></svg>
<div class="a" style="left:545px;top:221.0px;width:143px;height:18.6px;background:#5f5f5f"></div>
<svg class="a" style="left:553px;top:224.8px" width="9" height="11" viewBox="0 0 9 11"><path d="M0.8 5.6L2.9 9.6L8 0.8" fill="none" stroke="#fff" stroke-width="1.5"/></svg>
<div class="mi" style="left:564.8px;top:224.0px;letter-spacing:-0.20px">Textures</div>
<svg class="a" style="left:659px;top:223.9px" width="8" height="12" viewBox="0 0 8 12"><path d="M1.4 1.9L6.3 6L1.4 10.1" fill="none" stroke="#fff" stroke-width="1.9" stroke-linejoin="miter"/></svg>
<div class="mi" style="left:564.8px;top:244.8px;letter-spacing:-0.25px">_old</div>
<svg class="a" style="left:659px;top:244.70000000000002px" width="8" height="12" viewBox="0 0 8 12"><path d="M1.4 1.9L6.3 6L1.4 10.1" fill="none" stroke="#fff" stroke-width="1.9" stroke-linejoin="miter"/></svg>
<div class="mi" style="left:707.4px;top:90.3px;letter-spacing:-0.15px">Initialize patch</div>
<div class="mi" style="left:707.4px;top:111.1px;letter-spacing:-0.19px">Set current patch as default</div>
<div class="sep" style="left:692px;top:131px;width:235px"></div>
<div class="mi" style="left:707.4px;top:141.0px;letter-spacing:-0.46px">Save patch</div>
<div class="mi" style="left:869.5px;top:141.0px;letter-spacing:-0.14px">Ctrl + S</div>
<div class="sep" style="left:892px;top:182px;width:35px"></div>
<div class="sep" style="left:892px;top:232.5px;width:35px"></div>
<div class="sep" style="left:892px;top:261.5px;width:35px"></div>
<div class="sep" style="left:892px;top:354.5px;width:35px"></div>
<div class="sep" style="left:892px;top:383.5px;width:35px"></div>
<svg class="a" style="left:902.5px;top:364px" width="8" height="12" viewBox="0 0 8 12"><path d="M1.4 1.9L6.3 6L1.4 10.1" fill="none" stroke="#fff" stroke-width="1.9" stroke-linejoin="miter"/></svg>
<div class="a" style="left:687.6px;top:152px;width:204.4px;height:648px;background:#303030;border:1px solid #9a9a9a;box-shadow:0 2px 7px rgba(0,0,0,.35)"></div>
<div class="mi" style="left:707.5px;top:158.1px;letter-spacing:-0.20px">4D Soundwall</div>
<div class="mi" style="left:707.5px;top:178.9px;letter-spacing:-0.21px">2024 a.D.</div>
<div class="mi" style="left:707.5px;top:199.7px;letter-spacing:-0.25px">Achromatism</div>
<div class="mi" style="left:707.5px;top:220.5px;letter-spacing:-0.28px">Channel Flow</div>
<div class="mi" style="left:707.5px;top:241.3px;letter-spacing:0.08px">Digital Winter</div>
<div class="mi" style="left:707.5px;top:262.1px;letter-spacing:-0.21px">Doom Clock</div>
<div class="mi" style="left:707.5px;top:282.9px;letter-spacing:-0.25px">Electric River</div>
<div class="mi" style="left:707.5px;top:303.7px;letter-spacing:-0.56px">Fen</div>
<div class="mi" style="left:707.5px;top:324.5px;letter-spacing:-0.72px">GeneSeq</div>
<div class="mi" style="left:707.5px;top:345.3px;letter-spacing:-0.29px">Hazardous Container</div>
<div class="mi" style="left:707.5px;top:366.1px;letter-spacing:-0.29px">Hazardous Container II</div>
<div class="mi" style="left:707.5px;top:386.9px;letter-spacing:-0.26px">Kaleidoscope of Memories</div>
<div class="mi" style="left:707.5px;top:407.7px;letter-spacing:-0.14px">Let It Go</div>
<div class="a" style="left:689px;top:425.8px;width:202px;height:18px;background:#5f5f5f"></div>
<svg class="a" style="left:695.5px;top:429.3px" width="9" height="11" viewBox="0 0 9 11"><path d="M0.8 5.6L2.9 9.6L8 0.8" fill="none" stroke="#fff" stroke-width="1.5"/></svg>
<div class="mi" style="left:707.5px;top:428.5px;letter-spacing:-0.23px">Luminophore</div>
<div class="mi" style="left:707.5px;top:449.3px;letter-spacing:-0.24px">Luminophore II</div>
<div class="mi" style="left:707.5px;top:470.1px;letter-spacing:-0.17px">Memory of a Dream</div>
<div class="mi" style="left:707.5px;top:490.9px;letter-spacing:-0.09px">Mmrnmhrm</div>
<div class="mi" style="left:707.5px;top:511.7px;letter-spacing:-0.24px">Nostalgia Onset</div>
<div class="mi" style="left:707.5px;top:532.5px;letter-spacing:-0.61px">Omega</div>
<div class="mi" style="left:707.5px;top:553.3px;letter-spacing:0.03px">Orion Wind</div>
<div class="mi" style="left:707.5px;top:574.1px;letter-spacing:-0.19px">Rippled Mercury</div>
<div class="mi" style="left:707.5px;top:594.9px;letter-spacing:-0.40px">Sad Finale</div>
<div class="mi" style="left:707.5px;top:615.7px;letter-spacing:-0.46px">Saw Ridges</div>
<div class="mi" style="left:707.5px;top:636.5px;letter-spacing:-0.39px">Saw Ridges 2</div>
<div class="mi" style="left:707.5px;top:657.3px;letter-spacing:-0.54px">Scanners</div>
<div class="mi" style="left:707.5px;top:678.1px;letter-spacing:-0.56px">Snowscapes</div>
<div class="mi" style="left:707.5px;top:698.9px;letter-spacing:0.07px">Wait For It</div>
<div class="mi" style="left:707.5px;top:719.7px;letter-spacing:0.01px">Water of Life</div>
<div class="mi" style="left:707.5px;top:740.5px;letter-spacing:-0.33px">Weary Roamer</div>
<div class="mi" style="left:707.5px;top:761.3px;letter-spacing:-0.31px">Whack-a-Syllable</div>
<div class="mi" style="left:707.5px;top:782.1px;letter-spacing:0.04px">Winter of Discontent</div>
</body></html>
